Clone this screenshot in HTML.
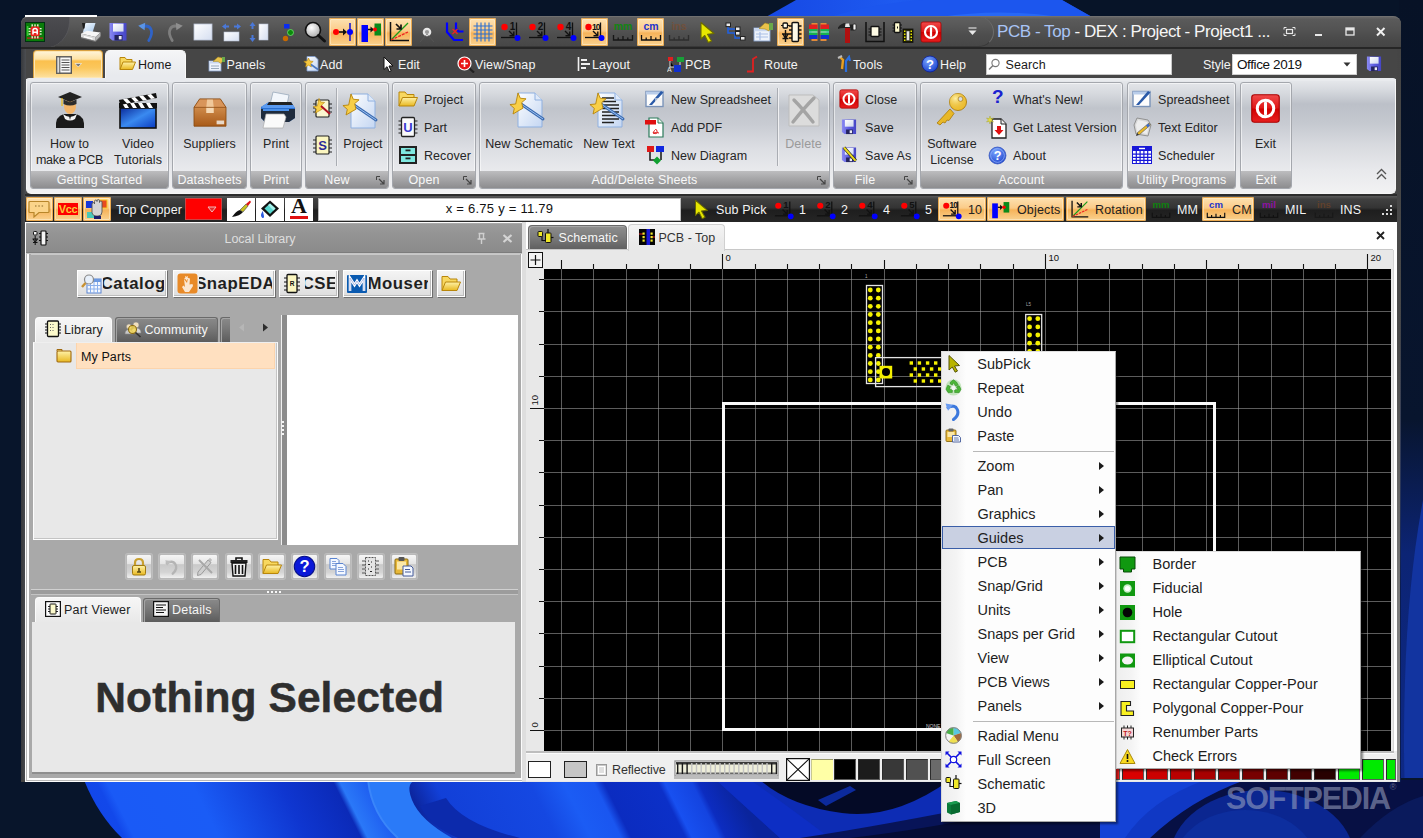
<!DOCTYPE html>
<html><head><meta charset="utf-8"><title>DEX</title>
<style>
*{box-sizing:border-box;margin:0;padding:0}
html,body{width:1423px;height:838px;overflow:hidden;background:#08152b;font-family:"Liberation Sans",sans-serif;font-size:13px;color:#222}
.abs{position:absolute}
.t{white-space:nowrap;transform:translateY(-50%);line-height:1.15}
.tc{transform:translate(-50%,-50%);text-align:center}
.qon{background:linear-gradient(#fde3b4 0,#fbcb88 46%,#f6b35a 54%,#fad493 100%);box-shadow:inset 0 0 0 1px #eaa94f, inset 0 0 0 2px rgba(255,240,210,.55);border-radius:2px}
.rg{border:1px solid #a4a7ad;border-radius:3px;background:linear-gradient(#e3e5e9 0,#d6d9de 10%,#c0c4cb 24%,#c9ccd3 40%,#dcdee3 62%,#e9eaed 84%,#eceef0 100%);box-shadow:inset 0 0 0 1px rgba(255,255,255,.55)}
.rlab{background:linear-gradient(#bdbdbf 0,#a6a6a8 45%,#8d8d8f 100%);border-radius:0 0 2px 2px}
.pbtn{background:linear-gradient(#f4f4f4,#dedede);border:1px solid #fff;box-shadow:1px 1px 0 #6d6d6d, inset -1px -1px 0 #bcbcbc;}
.ibtn{background:linear-gradient(#f6f6f6 0,#e4e4e4 38%,#c9c9c9 42%,#d4d4d4 75%,#f0f0f0 100%);border:1px solid #b9b9b9;border-radius:2px;box-shadow:0 0 0 1px rgba(255,255,255,.25)}
.menu{background:#fcfcfc;border:1px solid #9a9a9a;box-shadow:2px 2px 2px rgba(0,0,0,.4)}
.arr{width:0;height:0;border-left:5px solid #1a1a1a;border-top:4px solid transparent;border-bottom:4px solid transparent}
</style></head>
<body>
<svg width="0" height="0" style="position:absolute"><defs><linearGradient id="gpp" x1="0" y1="0" x2="1" y2="1"><stop offset="0" stop-color="#f6fafe"/><stop offset="1" stop-color="#a9cbee"/></linearGradient>
<linearGradient id="gsvb" x1="0" y1="0" x2="1" y2="0"><stop offset="0" stop-color="#8a8af2"/><stop offset=".5" stop-color="#5c5ce0"/><stop offset="1" stop-color="#4646c4"/></linearGradient>
<linearGradient id="gsv" x1="0" y1="0" x2="1" y2="1"><stop offset="0" stop-color="#fff"/><stop offset="1" stop-color="#cfd8ee"/></linearGradient>
<linearGradient id="gwb" x1="0" y1="0" x2="1" y2="1"><stop offset="0" stop-color="#fff"/><stop offset="1" stop-color="#d5def0"/></linearGradient>
<radialGradient id="gmg" cx=".4" cy=".35" r=".7"><stop offset="0" stop-color="#fff"/><stop offset="1" stop-color="#a8a8a8"/></radialGradient>
<linearGradient id="grd" x1="0" y1="0" x2="0" y2="1"><stop offset="0" stop-color="#f04a4a"/><stop offset=".48" stop-color="#e01818"/><stop offset=".52" stop-color="#d00000"/><stop offset="1" stop-color="#e82020"/></linearGradient>
<linearGradient id="gfo" x1="0" y1="0" x2="0" y2="1"><stop offset="0" stop-color="#fff2a8"/><stop offset="1" stop-color="#e8b820"/></linearGradient>
<linearGradient id="gpg" x1="0" y1="0" x2="1" y2="1"><stop offset="0" stop-color="#fdfeff"/><stop offset="1" stop-color="#c4d6f2"/></linearGradient>
<radialGradient id="ghl" cx=".4" cy=".3" r=".8"><stop offset="0" stop-color="#7aa6ff"/><stop offset="1" stop-color="#1238c8"/></radialGradient>
<linearGradient id="gbx" x1="0" y1="0" x2="0" y2="1"><stop offset="0" stop-color="#e0a060"/><stop offset="1" stop-color="#a85a18"/></linearGradient>
<symbol id="i-app" viewBox="0 0 20 20"><rect x=".5" y=".5" width="19" height="19" fill="#0a7d0a" stroke="#031" stroke-width="1"/><rect x="2" y="15.5" width="16" height="1.2" fill="#c22"/><rect x="1.8" y="4" width="1.6" height="10" fill="#3c3" /><g fill="#f2f2d8"><rect x="6.5" y="2.3" width="1.4" height="2.4"/><rect x="9.3" y="2.3" width="1.4" height="2.4"/><rect x="12.1" y="2.3" width="1.4" height="2.4"/><rect x="6.5" y="14" width="1.4" height="2.4"/><rect x="9.3" y="14" width="1.4" height="2.4"/><rect x="12.1" y="14" width="1.4" height="2.4"/><rect x="3.6" y="6" width="2.2" height="1.3"/><rect x="3.6" y="8.7" width="2.2" height="1.3"/><rect x="3.6" y="11.4" width="2.2" height="1.3"/><rect x="14.4" y="6" width="2.2" height="1.3"/><rect x="14.4" y="8.7" width="2.2" height="1.3"/><rect x="14.4" y="11.4" width="2.2" height="1.3"/></g><rect x="5.6" y="4.6" width="9" height="9.6" rx="1.5" fill="#e8221c"/><path d="M8 12.6V8.2q0-1.8 2.1-1.8t2.1 1.8v4.4M8 10.2h4.2" stroke="#fff" stroke-width="1.5" fill="none"/></symbol><symbol id="i-printer" viewBox="0 0 24 24"><path d="M7.500 3h10l-3 9.500H4.800z" fill="url(#gpp)"/><path d="M4 3h3.200l-.7 5.500H5z" fill="#1c1c1c"/><path d="M3 13.500L9 10.800l13.500 1.700L17.500 17z" fill="#f6f6f6"/><path d="M3 13.500L17.500 17v4L3 17.200z" fill="#dcdcdc"/><path d="M17.500 17l5-4.500v3.800l-5 4.700z" fill="#b4b4b4"/><path d="M6 16l8.500 2.200v1.300L6 17.300z" fill="#fff"/><path d="M3 17.200L17.500 21l5-4.700v1L17.500 22 3 18.200z" fill="#8a8a8a" opacity=".6"/></symbol><symbol id="i-save" viewBox="0 0 24 24"><path d="M3.500 3h17v17.500H6.500l-3-2.500z" fill="url(#gsvb)"/><rect x="7" y="3.600" width="10.500" height="8" fill="url(#gsv)"/><rect x="8.500" y="15" width="8" height="5.500" fill="#23235e"/><rect x="12.800" y="16" width="2.800" height="3.400" fill="#ececf6"/></symbol><symbol id="i-undo" viewBox="0 0 24 24"><path d="M8 6.800Q14.500 4.500 16.800 9T14.800 20.500" fill="none" stroke="#2f63c8" stroke-width="2.800" stroke-linecap="round"/><path d="M4.200 5.800l7-3-.6 7.400z" fill="#5a94e6"/></symbol><symbol id="i-redo" viewBox="0 0 24 24"><path d="M16 6.800Q9.500 4.500 7.200 9T9.200 20.500" fill="none" stroke="#7e7e7e" stroke-width="2.800" stroke-linecap="round"/><path d="M19.800 5.800l-7-3 .6 7.400z" fill="#8e8e8e"/></symbol><symbol id="i-rect" viewBox="0 0 24 24"><rect x="3" y="4" width="18" height="16" fill="url(#gwb)" stroke="#b9c3d6" stroke-width=".8"/></symbol><symbol id="i-fitw" viewBox="0 0 24 24"><rect x="5" y="12" width="15" height="9" fill="url(#gwb)" stroke="#b9c3d6" stroke-width=".6"/><path d="M3 6.500l4-3v2h3v2H7v2zM22 6.500l-4-3v2h-3v2h3v2z" fill="#4a78d8"/></symbol><symbol id="i-fith" viewBox="0 0 24 24"><rect x="12" y="4" width="9" height="16" fill="url(#gwb)" stroke="#b9c3d6" stroke-width=".6"/><path d="M5.500 2l3 4h-2v3h-2V6h-2zM5.500 22l3-4h-2v-3h-2v3h-2z" fill="#4a78d8"/></symbol><symbol id="i-flow" viewBox="0 0 24 24"><rect x="9" y="4" width="5.500" height="4.500" fill="#0a2cf0"/><circle cx="15.500" cy="12.500" r="3" fill="#0a8a0a" stroke="#6d6" stroke-width=".9"/><circle cx="10.500" cy="18.500" r="2.700" fill="#c96a00"/></symbol><symbol id="i-mag" viewBox="0 0 24 24"><circle cx="10" cy="10" r="7.500" fill="url(#gmg)" stroke="#111" stroke-width="1.600"/><path d="M15.500 15.500l6 5.500" stroke="#111" stroke-width="3" stroke-linecap="round"/></symbol><symbol id="i-snap" viewBox="0 0 24 24"><circle cx="5" cy="12" r="3" fill="#f00"/><path d="M8 12h6" stroke="#111" stroke-width="1.600"/><path d="M12 8.500l4 3.500-4 3.500z" fill="#111"/><path d="M19 3v18" stroke="#1a1acc" stroke-width="1.600"/><circle cx="19" cy="12" r="3" fill="#00f"/></symbol><symbol id="i-obj" viewBox="0 0 24 24"><rect x="2.500" y="5" width="6.500" height="17" fill="#00f"/><rect x="15.500" y="3.500" width="6.500" height="12" fill="#0a8a1a"/><path d="M9 9.500h4" stroke="#111" stroke-width="1.500"/><path d="M11.500 6.500l3.500 3-3.500 3z" fill="#111"/><circle cx="16" cy="9.500" r="2" fill="#f00"/></symbol><symbol id="i-rot" viewBox="0 0 24 24"><path d="M3.500 2v18.500H22" stroke="#111" stroke-width="1.500" fill="none"/><path d="M4 20L21 3" stroke="#1a9a1a" stroke-width="1.300"/><path d="M4 20l17-8" stroke="#e22" stroke-width="1.300" stroke-dasharray="3 1"/><path d="M9 4l4.500 4.500M14 4.500v4.500H9.500" stroke="#111" stroke-width="1.700" fill="none"/></symbol><symbol id="i-circ" viewBox="0 0 24 24"><circle cx="12" cy="12" r="3.200" fill="#999" stroke="#e8e8e8" stroke-width="2.200"/><path d="M12 14l-7 8M12 14l7 8" stroke="#5a5a5a" stroke-width=".6"/></symbol><symbol id="i-route" viewBox="0 0 24 24"><path d="M4 2.500v9.500l7 8h9" stroke="#00f" stroke-width="2.200" fill="none"/><path d="M13 2.500v6l2.500 3h5" stroke="#00f" stroke-width="2.200" fill="none"/><path d="M9.500 9l5 5M14.500 9l-5 5" stroke="#e22" stroke-width="1.300"/></symbol><symbol id="i-grid" viewBox="0 0 24 24"><path d="M6 2.500v19M10 2.500v19M14 2.500v19M18 2.500v19M2.500 6h19M2.500 10h19M2.500 14h19M2.500 18h19" stroke="#2a6fd0" stroke-width="1.100"/></symbol><symbol id="i-n1" viewBox="0 0 24 24"><circle cx="5.5" cy="7" r="3.2" fill="#f00"/><path d="M17.5 2.5V17" stroke="#111" stroke-width="1.3" fill="none"/><path d="M2 17.5H17" stroke="#111" stroke-width="1.3"/><path d="M10 11l4.5 4.5M14.8 11.5v4.3h-4.3" stroke="#111" stroke-width="1.4" fill="none"/><circle cx="18.5" cy="18" r="3" fill="#00f"/><text x="16.2" y="9.5" font-family="Liberation Sans" font-size="10" font-weight="bold" text-anchor="end" fill="#111" >1</text></symbol><symbol id="i-n2" viewBox="0 0 24 24"><circle cx="5.5" cy="7" r="3.2" fill="#f00"/><path d="M17.5 2.5V17" stroke="#111" stroke-width="1.3" fill="none"/><path d="M2 17.5H17" stroke="#111" stroke-width="1.3"/><path d="M10 11l4.5 4.5M14.8 11.5v4.3h-4.3" stroke="#111" stroke-width="1.4" fill="none"/><circle cx="18.5" cy="18" r="3" fill="#00f"/><text x="16.2" y="9.5" font-family="Liberation Sans" font-size="10" font-weight="bold" text-anchor="end" fill="#111" >2</text></symbol><symbol id="i-n4" viewBox="0 0 24 24"><circle cx="5.5" cy="7" r="3.2" fill="#f00"/><path d="M17.5 2.5V17" stroke="#111" stroke-width="1.3" fill="none"/><path d="M2 17.5H17" stroke="#111" stroke-width="1.3"/><path d="M10 11l4.5 4.5M14.8 11.5v4.3h-4.3" stroke="#111" stroke-width="1.4" fill="none"/><circle cx="18.5" cy="18" r="3" fill="#00f"/><text x="16.2" y="9.5" font-family="Liberation Sans" font-size="10" font-weight="bold" text-anchor="end" fill="#111" >4</text></symbol><symbol id="i-n5" viewBox="0 0 24 24"><circle cx="5.5" cy="7" r="3.2" fill="#f00"/><path d="M17.5 2.5V17" stroke="#111" stroke-width="1.3" fill="none"/><path d="M2 17.5H17" stroke="#111" stroke-width="1.3"/><path d="M10 11l4.5 4.5M14.8 11.5v4.3h-4.3" stroke="#111" stroke-width="1.4" fill="none"/><circle cx="18.5" cy="18" r="3" fill="#00f"/><text x="16.2" y="9.5" font-family="Liberation Sans" font-size="10" font-weight="bold" text-anchor="end" fill="#111" >5</text></symbol><symbol id="i-n10" viewBox="0 0 24 24"><circle cx="5.5" cy="7" r="3.2" fill="#f00"/><path d="M17.5 2.5V17" stroke="#111" stroke-width="1.3" fill="none"/><path d="M2 17.5H17" stroke="#111" stroke-width="1.3"/><path d="M10 11l4.5 4.5M14.8 11.5v4.3h-4.3" stroke="#111" stroke-width="1.4" fill="none"/><circle cx="18.5" cy="18" r="3" fill="#00f"/><text x="16.8" y="9.5" font-family="Liberation Sans" font-size="8.5" font-weight="bold" text-anchor="end" fill="#111" letter-spacing="-0.8">10</text></symbol><symbol id="i-mm" viewBox="0 0 24 24"><g opacity="0.9"><text x="12" y="10" font-family="Liberation Sans" font-size="10.5" font-weight="bold" text-anchor="middle" fill="#0a8a0a">mm</text><path d="M2.5 15v5h19v-5M7.2 17.5v2.5M12 16v4M16.8 17.5v2.5" stroke="#111" stroke-width="1.3" fill="none"/></g></symbol><symbol id="i-cm" viewBox="0 0 24 24"><g opacity="1"><text x="12" y="10" font-family="Liberation Sans" font-size="10.5" font-weight="bold" text-anchor="middle" fill="#2233cc">cm</text><path d="M2.5 15v5h19v-5M7.2 17.5v2.5M12 16v4M16.8 17.5v2.5" stroke="#111" stroke-width="1.3" fill="none"/></g></symbol><symbol id="i-mil" viewBox="0 0 24 24"><g opacity="0.9"><text x="12" y="10" font-family="Liberation Sans" font-size="10.5" font-weight="bold" text-anchor="middle" fill="#9a10b0">mil</text><path d="M2.5 15v5h19v-5M7.2 17.5v2.5M12 16v4M16.8 17.5v2.5" stroke="#111" stroke-width="1.3" fill="none"/></g></symbol><symbol id="i-ins" viewBox="0 0 24 24"><g opacity="0.5"><text x="12" y="10" font-family="Liberation Sans" font-size="10.5" font-weight="bold" text-anchor="middle" fill="#8a4a20">ins</text><path d="M2.5 15v5h19v-5M7.2 17.5v2.5M12 16v4M16.8 17.5v2.5" stroke="#111" stroke-width="1.3" fill="none"/></g></symbol><symbol id="i-yarrow" viewBox="0 0 24 24"><path d="M6 2.500l13 11-6.500.8 4 6.700-3.200 1.500-3.500-7L6 19z" fill="#e6e600" stroke="#6b6b00" stroke-width="1.100" stroke-linejoin="round"/></symbol><symbol id="i-tree" viewBox="0 0 24 24"><path d="M5 7v6h7M12 13v5h6" stroke="#2060e0" stroke-width="1.600" fill="none"/><path d="M5 9h8" stroke="#2060e0" stroke-width="1.600"/><rect x="3" y="3" width="4.500" height="3.600" fill="#e8e8e8" stroke="#222" stroke-width="1"/><rect x="12.500" y="7" width="4.500" height="3.600" fill="#e8e8e8" stroke="#222" stroke-width="1"/><rect x="12.500" y="11.500" width="4.500" height="3.600" fill="#e8e8e8" stroke="#222" stroke-width="1"/><rect x="17.500" y="16.500" width="4.500" height="3.600" fill="#e8e8e8" stroke="#222" stroke-width="1"/></symbol><symbol id="i-panels" viewBox="0 0 24 24"><rect x="3" y="8" width="16" height="13" fill="#eef3fb" stroke="#8aa4cf" stroke-width=".9"/><rect x="3" y="8" width="16" height="3.200" fill="#c9d7ef"/><path d="M5 14h12M5 17h12M9 12v8" stroke="#a9bfe6" stroke-width="1.200"/><path d="M8 8.500L14 3l7 2-3 6-4-2z" fill="#e9c24a" stroke="#a88a20" stroke-width=".6"/><rect x="18" y="3" width="4" height="7" fill="#6aa84a"/></symbol><symbol id="i-comp" viewBox="0 0 24 24"><rect x="13" y="2.500" width="6.500" height="19" rx="1" fill="#fffbe8" stroke="#111" stroke-width="1.400"/><path d="M10 6h3M10 10h3M10 14h3M10 18h3M19.500 6h3M19.500 10h3M19.500 14h3M19.500 18h3" stroke="#111" stroke-width="1.300"/><rect x="4" y="3" width="4.500" height="5" rx="1" fill="#fffbe8" stroke="#111" stroke-width="1.300"/><path d="M2 5.500h2M8.500 5.500h2" stroke="#111" stroke-width="1.200"/><path d="M6.500 10v12M3 14h7M3.500 18.500h6M4 14l2.500 4.500L9 14" stroke="#111" stroke-width="1.400" fill="none"/></symbol><symbol id="i-layers" viewBox="0 0 24 24"><g><rect x="4.500" y="3" width="6" height="18" fill="#e08a3a"/><rect x="13.500" y="3" width="6" height="18" fill="#e08a3a"/><rect x="2" y="4.500" width="8.500" height="4.500" fill="#e02020"/><rect x="2" y="9" width="8.500" height="2.500" fill="#18b050"/><rect x="2" y="11.500" width="8.500" height="1.200" fill="#6fe"/><rect x="2" y="12.700" width="8.500" height="2.300" fill="#18b050"/><rect x="2" y="15" width="8.500" height="4" fill="#1030d0"/><rect x="13.500" y="4.500" width="8.500" height="4.500" fill="#e02020"/><rect x="13.500" y="9" width="8.500" height="2.500" fill="#18b050"/><rect x="13.500" y="11.500" width="8.500" height="1.200" fill="#6fe"/><rect x="13.500" y="12.700" width="8.500" height="2.300" fill="#18b050"/><rect x="13.500" y="15" width="8.500" height="4" fill="#1030d0"/></g></symbol><symbol id="i-hammer" viewBox="0 0 24 24"><rect x="10" y="8" width="5" height="15" fill="#b01010"/><path d="M3 7.500Q6 3 11 3l3 1.500h5v6h-3.500V8H9Q5 8 3 9z" fill="#222"/><path d="M10.500 3.500h3.500l1 3.500h-5z" fill="#e8e8e8"/><rect x="18" y="4" width="3" height="6" rx="1" fill="#f2f2f2" stroke="#222" stroke-width=".8"/></symbol><symbol id="i-chip1" viewBox="0 0 24 24"><path d="M3 2v19.500h18V2" stroke="#111" stroke-width="1.500" fill="none"/><rect x="8" y="6.500" width="8" height="10" rx=".8" fill="#fffce6" stroke="#111" stroke-width="1.300"/><path d="M5.500 9h2.500M5.500 12h2.500M5.500 15h2.500M16 9h2.500M16 12h2.500M16 15h2.500" stroke="#111" stroke-width="1.100"/></symbol><symbol id="i-chip2" viewBox="0 0 24 24"><rect x="3.500" y="2.500" width="5.500" height="10" rx=".8" fill="#fffbd0" stroke="#111" stroke-width="1.300"/><path d="M1.500 5h2M1.500 8h2M1.500 11h2M9 5h2M9 8h2M9 11h2" stroke="#111" stroke-width="1.100"/><rect x="6" y="6.500" width="1" height="2" fill="#111"/><rect x="12" y="9" width="10" height="13.500" fill="#1c1c00" stroke="#111" stroke-width=".8"/><rect x="15.500" y="11" width="3" height="9.500" fill="#e8e8e8" stroke="#555" stroke-width=".6"/><g fill="#e6e600"><rect x="13" y="10.500" width="1.500" height="1.500"/><rect x="13" y="13.500" width="1.500" height="1.500"/><rect x="13" y="16.500" width="1.500" height="1.500"/><rect x="13" y="19.500" width="1.500" height="1.500"/><rect x="19.500" y="10.500" width="1.500" height="1.500"/><rect x="19.500" y="13.500" width="1.500" height="1.500"/><rect x="19.500" y="16.500" width="1.500" height="1.500"/><rect x="19.500" y="19.500" width="1.500" height="1.500"/></g></symbol><symbol id="i-power" viewBox="0 0 24 24"><rect x="2" y="2" width="20" height="20" rx="2" fill="url(#grd)" stroke="#a00" stroke-width=".8"/><circle cx="12" cy="12" r="6" fill="none" stroke="#fff" stroke-width="2.200"/><path d="M12 8v8" stroke="#fff" stroke-width="2.200" stroke-linecap="round"/></symbol></defs></svg>
<svg class="abs" style="left:0;top:0" width="1423" height="838" viewBox="0 0 1423 838">
<defs>
<linearGradient id="wb" gradientUnits="userSpaceOnUse" x1="70" y1="810" x2="610.800" y2="539.600">
<stop offset="0" stop-color="#1244e6"/><stop offset=".06" stop-color="#1248ea"/><stop offset=".075" stop-color="#1a5af6"/><stop offset=".2" stop-color="#1a5cf6"/><stop offset=".33" stop-color="#0f36d0"/><stop offset=".41" stop-color="#0b2ab8"/>
<stop offset=".42" stop-color="#2a78f8"/><stop offset=".47" stop-color="#1c58ee"/><stop offset=".5" stop-color="#0a1c8a"/><stop offset=".56" stop-color="#1240d8"/><stop offset=".7" stop-color="#1548e2"/><stop offset=".75" stop-color="#1b5cf4"/><stop offset=".795" stop-color="#1a56f0"/><stop offset=".81" stop-color="#0b2cc0"/><stop offset=".89" stop-color="#0c30c8"/><stop offset=".9" stop-color="#1850f0"/><stop offset=".94" stop-color="#1444e0"/><stop offset=".95" stop-color="#0c2cc0"/><stop offset="1" stop-color="#0a249c"/>
</linearGradient>
<linearGradient id="wr2" gradientUnits="userSpaceOnUse" x1="726" y1="0" x2="1423" y2="0"><stop offset="0" stop-color="#0b2cb4"/><stop offset=".3" stop-color="#0a2498"/><stop offset=".6" stop-color="#081c78"/><stop offset="1" stop-color="#0b2490"/></linearGradient>
<linearGradient id="wr" x1="0" y1="0" x2="0" y2="1"><stop offset="0" stop-color="#071226"/><stop offset=".5" stop-color="#08152e"/><stop offset=".66" stop-color="#0c2474"/><stop offset="1" stop-color="#0e2a8a"/></linearGradient>
<linearGradient id="wt" x1="0" y1="0" x2="1" y2="0"><stop offset="0" stop-color="#1648e4"/><stop offset=".4" stop-color="#1e5af0"/><stop offset="1" stop-color="#1442d8"/></linearGradient>
</defs>
<rect width="1423" height="838" fill="#08152b"/>
<rect x="0" y="0" width="1423" height="20" fill="#071428"/>
<path d="M766 17L796 0H1062L1092 17z" fill="url(#wt)"/>
<path d="M830 17Q900 -6 1000 0L1062 0L1092 17z" fill="#1c56ee"/>
<path d="M940 17Q1000 8 1060 17z" fill="#2868f6"/>
<rect x="1399" y="0" width="24" height="838" fill="url(#wr)"/>
<path d="M1423 500Q1408 580 1405 680T1408 838H1423z" fill="#1234a0"/>
<!-- bottom strip -->
<rect x="0" y="778" width="1423" height="60" fill="#08152b"/>
<path d="M84 780Q98 815 122 838H1423V780z" fill="#071044"/>
<path d="M84 780Q98 815 122 838H790L726 780z" fill="url(#wb)"/>
<path d="M368 780Q372 815 398 838H452Q420 820 412 800T420 780z" fill="#2a7af8"/>
<path d="M420 806Q430 826 458 838H520Q462 824 446 798z" fill="#0c2aac"/><path d="M368 780Q372 815 398 838" stroke="#3a86fa" stroke-width="2" fill="none"/>
<path d="M716 780H1010V838H780z" fill="#0d2cb4"/>
<path d="M716 780L780 838H830Q780 800 750 780z" fill="#0d2ec4"/>
<path d="M760 780Q790 806 842 813T950 780z" fill="#040a26"/>
<path d="M818 800L850 786L856 790L826 806z" fill="#0c2a9c"/>
<path d="M800 838Q880 826 1010 800V838z" fill="#081458"/>
<path d="M850 838Q920 830 1010 812V838z" fill="#050c34"/>
<path d="M1100 780H1245Q1190 800 1150 838H1100z" fill="#1038c4"/>
<path d="M1100 780H1205Q1150 800 1125 838H1100z" fill="#1442d6"/>
<ellipse cx="1262" cy="858" rx="92" ry="68" fill="#0b2690"/>
<ellipse cx="1245" cy="866" rx="72" ry="56" fill="#0d2e9e"/>
<path d="M1360 838Q1390 806 1423 796V838z" fill="#0a1a5c"/>
</svg>
<div class="abs" style="left:1226px;top:781px;font-size:30.500px;font-weight:bold;color:rgba(165,172,198,.55);letter-spacing:-1.2px;white-space:nowrap">SOFTPEDIA<span style="font-size:9px;vertical-align:top;position:relative;top:1px;font-weight:normal">&reg;</span></div>
<div class="abs " style="left:21px;top:16px;width:1380px;height:766px;background:#424242;border-radius:8px 8px 0 0"></div>
<div class="abs " style="left:21px;top:48px;width:5px;height:732px;background:linear-gradient(90deg,#36383c,#4c4e52)"></div>
<div class="abs " style="left:1396px;top:48px;width:5px;height:734px;background:linear-gradient(#454545 0,#4a4a4a 40%,#7a7a7a 75%,#8e8e8e 100%)"></div>
<div class="abs " style="left:1400px;top:300px;width:1px;height:482px;background:linear-gradient(rgba(8,21,43,0),#0a1c50 60%)"></div>
<div class="abs " style="left:21px;top:16px;width:1380px;height:32px;background:linear-gradient(#666 0,#5a5a5a 8%,#535353 40%,#4a4a4a 70%,#444 100%);border-radius:8px 8px 0 0;border-top:1px solid #707070"></div>
<div class="abs " style="left:55px;top:17px;width:939px;height:30px;background:linear-gradient(#606060 0,#585858 30%,#4e4e4e 60%,#474747 100%);border-radius:0 15px 15px 0;border-right:1px solid #6c6c6c;border-bottom:1px solid #383838"></div>
<div class="abs " style="left:21px;top:17px;width:49px;height:31px;background:linear-gradient(#4c4c50,#3e3e42);border-radius:8px 0 26px 0;border-right:1px solid #58585c"></div>
<div class="abs " style="left:21px;top:47px;width:1380px;height:2px;background:#262626"></div>
<div class="abs " style="left:25px;top:15px;width:72px;height:2px;background:#fdfdfd"></div>
<svg class="abs" style="left:25px;top:22px" width="20" height="20"><use href="#i-app"/></svg>
<svg class="abs" style="left:78px;top:20px" width="24" height="24"><use href="#i-printer"/></svg>
<svg class="abs" style="left:106px;top:20px" width="24" height="24"><use href="#i-save"/></svg>
<svg class="abs" style="left:134px;top:20px" width="24" height="24"><use href="#i-undo"/></svg>
<svg class="abs" style="left:163px;top:20px" width="24" height="24"><use href="#i-redo"/></svg>
<svg class="abs" style="left:191px;top:20px" width="24" height="24"><use href="#i-rect"/></svg>
<svg class="abs" style="left:219px;top:20px" width="24" height="24"><use href="#i-fitw"/></svg>
<svg class="abs" style="left:247px;top:20px" width="24" height="24"><use href="#i-fith"/></svg>
<svg class="abs" style="left:275px;top:20px" width="24" height="24"><use href="#i-flow"/></svg>
<svg class="abs" style="left:303px;top:20px" width="24" height="24"><use href="#i-mag"/></svg>
<div class="abs qon" style="left:329.0px;top:18px;width:27.0px;height:28px;"></div>
<svg class="abs" style="left:330.5px;top:20px" width="24" height="24"><use href="#i-snap"/></svg>
<div class="abs qon" style="left:357.0px;top:18px;width:27.0px;height:28px;"></div>
<svg class="abs" style="left:358.5px;top:20px" width="24" height="24"><use href="#i-obj"/></svg>
<div class="abs qon" style="left:385.0px;top:18px;width:27.0px;height:28px;"></div>
<svg class="abs" style="left:386.5px;top:20px" width="24" height="24"><use href="#i-rot"/></svg>
<svg class="abs" style="left:415px;top:20px" width="24" height="24"><use href="#i-circ"/></svg>
<svg class="abs" style="left:443px;top:20px" width="24" height="24"><use href="#i-route"/></svg>
<div class="abs qon" style="left:469.0px;top:18px;width:27.0px;height:28px;"></div>
<svg class="abs" style="left:470.5px;top:20px" width="24" height="24"><use href="#i-grid"/></svg>
<svg class="abs" style="left:499px;top:20px" width="24" height="24"><use href="#i-n1"/></svg>
<svg class="abs" style="left:527px;top:20px" width="24" height="24"><use href="#i-n2"/></svg>
<svg class="abs" style="left:555px;top:20px" width="24" height="24"><use href="#i-n4"/></svg>
<div class="abs qon" style="left:581.0px;top:18px;width:27.0px;height:28px;"></div>
<svg class="abs" style="left:582.5px;top:20px" width="24" height="24"><use href="#i-n10"/></svg>
<svg class="abs" style="left:611px;top:20px" width="24" height="24"><use href="#i-mm"/></svg>
<div class="abs qon" style="left:637.0px;top:18px;width:27.0px;height:28px;"></div>
<svg class="abs" style="left:638.5px;top:20px" width="24" height="24"><use href="#i-cm"/></svg>
<svg class="abs" style="left:667px;top:20px" width="24" height="24"><use href="#i-ins"/></svg>
<svg class="abs" style="left:695px;top:20px" width="24" height="24"><use href="#i-yarrow"/></svg>
<svg class="abs" style="left:723px;top:20px" width="24" height="24"><use href="#i-tree"/></svg>
<svg class="abs" style="left:751px;top:20px" width="24" height="24"><use href="#i-panels"/></svg>
<div class="abs qon" style="left:777.0px;top:18px;width:27.0px;height:28px;"></div>
<svg class="abs" style="left:778.5px;top:20px" width="24" height="24"><use href="#i-comp"/></svg>
<svg class="abs" style="left:807px;top:20px" width="24" height="24"><use href="#i-layers"/></svg>
<svg class="abs" style="left:835px;top:20px" width="24" height="24"><use href="#i-hammer"/></svg>
<svg class="abs" style="left:863px;top:20px" width="24" height="24"><use href="#i-chip1"/></svg>
<svg class="abs" style="left:891px;top:20px" width="24" height="24"><use href="#i-chip2"/></svg>
<svg class="abs" style="left:919px;top:20px" width="24" height="24"><use href="#i-power"/></svg>
<svg class="abs" style="left:967px;top:27px" width="11" height="9" viewBox="0 0 11 9"><path d="M1.500 1h8" stroke="#ddd" stroke-width="1.200"/><path d="M1.500 3.500h8l-4 4.500z" fill="#e8e8e8"/></svg>
<div class="abs t" style="left:997px;top:32px;font-size:17px;color:#f6f6f6;letter-spacing:-0.44px"><span style="color:#a9c4f5">PCB - Top</span> - DEX : Project - Project1 ...</div>
<svg class="abs" style="left:1283px;top:25px" width="110" height="14" viewBox="0 0 110 14"><g stroke="#e8e8e8" fill="none"><rect x="3.500" y="4.500" width="6" height="4" stroke-width="1.200"/><path d="M1 4.500V2.500h2.500M12 4.500V2.500H9.500M1 8.500v2h2.500M12 8.500v2H9.500" stroke-width="1"/></g><rect x="32" y="9" width="7" height="2" fill="#e8e8e8"/><rect x="63" y="3" width="8" height="7" fill="none" stroke="#e8e8e8" stroke-width="1.300"/><rect x="63" y="3" width="8" height="2.500" fill="#e8e8e8"/><path d="M94 3l7.500 7.500M101.500 3L94 10.500" stroke="#f0f0f0" stroke-width="2"/></svg>
<div class="abs " style="left:26px;top:49px;width:1371px;height:30px;background:#464646"></div>
<div class="abs " style="left:33px;top:50px;width:70px;height:28px;background:linear-gradient(#fff5da 0,#fde2a6 30%,#fbc04e 37%,#fbc75c 62%,#fde2a2 100%);border-radius:4px 4px 0 0;box-shadow:inset 0 0 0 1px #fde6b4;border:1px solid #d8a040;border-bottom:none"></div>
<svg class="abs" style="left:56px;top:56px" width="28" height="18" viewBox="0 0 28 18"><rect x=".8" y=".8" width="14.500" height="16.400" fill="#fafafa" stroke="#555" stroke-width="1.400"/><rect x=".8" y=".8" width="3" height="16.400" fill="#ddd" stroke="#555" stroke-width="1"/><path d="M5.500 4h8M5.500 6.500h8M5.500 9h8M5.500 11.500h8M5.500 14h8" stroke="#555" stroke-width="1.100"/><path d="M19 7.500h6.500l-3.250 3.500z" fill="#777" stroke="#fff" stroke-width=".6"/></svg>
<div class="abs " style="left:105px;top:50px;width:81px;height:30px;background:linear-gradient(#f4f5f7,#e6e8ec);border-radius:5px 5px 0 0;border:1px solid #f8f8f8;border-bottom:none"></div>
<svg class="abs" style="left:119px;top:56px" width="17" height="15" viewBox="0 0 17 15"><path d="M1 13.500V1.500h5l1.500 2H13v3" fill="#f8d860" stroke="#b8860b" stroke-width="1"/><path d="M1 13.500l3-7.500h12.500l-3 7.500z" fill="url(#gfo)" stroke="#b8860b" stroke-width="1"/></svg>
<div class="abs t" style="left:138px;top:64.5px;font-size:12.5px;color:#1a1a1a;">Home</div>
<div class="abs t" style="left:226.5px;top:64.5px;font-size:12.5px;color:#f4f4f4;letter-spacing:0.1px">Panels</div>
<div class="abs t" style="left:320px;top:64.5px;font-size:12.5px;color:#f4f4f4;letter-spacing:0.1px">Add</div>
<div class="abs t" style="left:398px;top:64.5px;font-size:12.5px;color:#f4f4f4;letter-spacing:0.1px">Edit</div>
<div class="abs t" style="left:475px;top:64.5px;font-size:12.5px;color:#f4f4f4;letter-spacing:0.1px">View/Snap</div>
<div class="abs t" style="left:592px;top:64.5px;font-size:12.5px;color:#f4f4f4;letter-spacing:0.1px">Layout</div>
<div class="abs t" style="left:685px;top:64.5px;font-size:12.5px;color:#f4f4f4;letter-spacing:0.1px">PCB</div>
<div class="abs t" style="left:764px;top:64.5px;font-size:12.5px;color:#f4f4f4;letter-spacing:0.1px">Route</div>
<div class="abs t" style="left:853px;top:64.5px;font-size:12.5px;color:#f4f4f4;letter-spacing:0.1px">Tools</div>
<div class="abs t" style="left:940px;top:64.5px;font-size:12.5px;color:#f4f4f4;letter-spacing:0.1px">Help</div>
<svg class="abs" style="left:208px;top:56px" width="18" height="16" viewBox="0 0 18 16"><rect x="1" y="5" width="12" height="10" fill="#eef3fb" stroke="#8aa4cf" stroke-width=".8"/><rect x="1" y="5" width="12" height="2.500" fill="#c9d7ef"/><path d="M3 10h8M3 12.500h8" stroke="#9ab" stroke-width="1"/><path d="M5 5.500L10 1l6 1.500-3 5-3-2z" fill="#e9c24a" stroke="#a88a20" stroke-width=".5"/><rect x="14" y="1" width="3" height="5" fill="#6aa84a"/></svg>
<svg class="abs" style="left:302px;top:55px" width="18" height="18" viewBox="0 0 18 18"><path d="M5 1.500h8l3 3V16H5z" fill="url(#gpg)" stroke="#7d9ccf" stroke-width=".8"/><path d="M6.500 3l1.400 3 3.300.4-2.500 2.200.7 3.300-2.900-1.700-2.900 1.700.7-3.300L1.800 6.400l3.300-.4z" fill="#f6c840" stroke="#b8860b" stroke-width=".6"/><path d="M9 9.500l7 5" stroke="#4a78c0" stroke-width="1.600"/></svg>
<svg class="abs" style="left:383px;top:56px" width="12" height="17" viewBox="0 0 12 17"><path d="M1 1v12.500l3-2.800 2.200 5 2-.9-2.200-4.800H10z" fill="#fff" stroke="#111" stroke-width="1"/></svg>
<svg class="abs" style="left:457px;top:56px" width="18" height="17" viewBox="0 0 18 17"><circle cx="7.500" cy="7.500" r="6.500" fill="#e81818" stroke="#fff" stroke-width="1.200"/><path d="M7.500 4v7M4 7.500h7" stroke="#fff" stroke-width="1.600"/><path d="M12.500 12.500l4.500 4" stroke="#222" stroke-width="2.200"/></svg>
<svg class="abs" style="left:577px;top:57px" width="14" height="14" viewBox="0 0 14 14"><path d="M1.500 0v14" stroke="#f0f0f0" stroke-width="1.600"/><path d="M4 3h6M4 7h9M4 11h5" stroke="#f0f0f0" stroke-width="2"/></svg>
<svg class="abs" style="left:667px;top:56px" width="18" height="17" viewBox="0 0 18 17"><rect x="1" y="1" width="5" height="4" fill="#e02020"/><rect x="10" y="1" width="7" height="5" fill="#18a038"/><rect x="7" y="9" width="7" height="7" fill="#1030d0"/><path d="M3 5v6h4M13 6v3" stroke="#ddd" stroke-width="1"/><text x="0" y="16" font-size="7" fill="#eee" font-family="Liberation Sans">A</text></svg>
<svg class="abs" style="left:745px;top:55px" width="18" height="18" viewBox="0 0 18 18"><path d="M2 16.500h6V4l4-2.500" stroke="#e02020" stroke-width="1.800" fill="none"/></svg>
<svg class="abs" style="left:835px;top:55px" width="18" height="18" viewBox="0 0 18 18"><path d="M5 2l3 3-1 9" stroke="#e8a020" stroke-width="2.400" fill="none"/><path d="M11 17V6l3-4 1 4" stroke="#2a6fe0" stroke-width="2.200" fill="none"/><path d="M3 3l4-2" stroke="#bbb" stroke-width="2"/></svg>
<svg class="abs" style="left:921px;top:55px" width="18" height="18" viewBox="0 0 18 18"><circle cx="9" cy="9" r="8" fill="url(#ghl)" stroke="#0a1f9a" stroke-width=".8"/><text x="9" y="13.500" font-size="13" font-weight="bold" text-anchor="middle" fill="#fff" font-family="Liberation Sans">?</text></svg>
<div class="abs " style="left:986px;top:54px;width:186px;height:21px;background:#fff;border:1px solid #c8c8c8"></div>
<svg class="abs" style="left:988px;top:58px" width="13" height="13" viewBox="0 0 13 13"><circle cx="7.500" cy="5" r="3.600" fill="none" stroke="#777" stroke-width="1.100"/><path d="M5 7.500L1 11.500" stroke="#777" stroke-width="1.400"/></svg>
<div class="abs t" style="left:1005.5px;top:64.5px;font-size:12.5px;color:#1a1a1a;letter-spacing:0.1px">Search</div>
<div class="abs t" style="left:1203px;top:64.5px;font-size:12.5px;color:#f4f4f4;letter-spacing:0px">Style</div>
<div class="abs " style="left:1232px;top:54px;width:125px;height:21px;background:#fff;border:1px solid #d0d0d0"></div>
<div class="abs t" style="left:1237px;top:64.5px;font-size:13.5px;color:#111;letter-spacing:-0.38px">Office 2019</div>
<svg class="abs" style="left:1343px;top:62px" width="8" height="5" viewBox="0 0 8 5"><path d="M.5.500h7L4 4.500z" fill="#333"/></svg>
<svg class="abs" style="left:1364px;top:54px" width="20" height="20"><use href="#i-save"/></svg>
<div class="abs " style="left:26px;top:79px;width:1370px;height:115px;background:linear-gradient(#e8eaed 0,#d8dbe0 9%,#bcc0c8 22%,#c4c8cf 38%,#d8dadf 58%,#e8e9ec 80%,#f2f2f3 100%);border:1px solid #f6f6f6;border-top:none;border-radius:0 0 5px 5px"></div>
<div class="abs " style="left:26px;top:78px;width:1370px;height:3px;background:#e9ebee;border-radius:4px 4px 0 0"></div>
<div class="abs " style="left:106px;top:76px;width:79px;height:6px;background:#e8eaee"></div>
<div class="abs rg" style="left:30px;top:82px;width:139px;height:107px;"></div>
<div class="abs rlab" style="left:31px;top:171px;width:137px;height:17px;"></div>
<div class="abs t tc" style="left:99.5px;top:179.5px;font-size:12.5px;color:#f8f8f8;letter-spacing:0.1px">Getting Started</div>
<div class="abs rg" style="left:172px;top:82px;width:75px;height:107px;"></div>
<div class="abs rlab" style="left:173px;top:171px;width:73px;height:17px;"></div>
<div class="abs t tc" style="left:209.5px;top:179.5px;font-size:12.5px;color:#f8f8f8;letter-spacing:0.1px">Datasheets</div>
<div class="abs rg" style="left:250px;top:82px;width:52px;height:107px;"></div>
<div class="abs rlab" style="left:251px;top:171px;width:50px;height:17px;"></div>
<div class="abs t tc" style="left:276.0px;top:179.5px;font-size:12.5px;color:#f8f8f8;letter-spacing:0.1px">Print</div>
<div class="abs rg" style="left:305px;top:82px;width:84px;height:107px;"></div>
<div class="abs rlab" style="left:306px;top:171px;width:82px;height:17px;"></div>
<div class="abs t tc" style="left:337.0px;top:179.5px;font-size:12.5px;color:#f8f8f8;letter-spacing:0.1px">New</div>
<svg class="abs" style="left:376px;top:176px" width="9" height="9" viewBox="0 0 9 9"><path d="M.500 4V.500H4" stroke="#444" fill="none"/><path d="M3 3l4.500 4.500M8 4v4H4" stroke="#444" stroke-width="1.200" fill="none"/></svg>
<div class="abs rg" style="left:392px;top:82px;width:84px;height:107px;"></div>
<div class="abs rlab" style="left:393px;top:171px;width:82px;height:17px;"></div>
<div class="abs t tc" style="left:424.0px;top:179.5px;font-size:12.5px;color:#f8f8f8;letter-spacing:0.1px">Open</div>
<svg class="abs" style="left:463px;top:176px" width="9" height="9" viewBox="0 0 9 9"><path d="M.500 4V.500H4" stroke="#444" fill="none"/><path d="M3 3l4.500 4.500M8 4v4H4" stroke="#444" stroke-width="1.200" fill="none"/></svg>
<div class="abs rg" style="left:479px;top:82px;width:351px;height:107px;"></div>
<div class="abs rlab" style="left:480px;top:171px;width:349px;height:17px;"></div>
<div class="abs t tc" style="left:644.5px;top:179.5px;font-size:12.5px;color:#f8f8f8;letter-spacing:0.1px">Add/Delete Sheets</div>
<svg class="abs" style="left:817px;top:176px" width="9" height="9" viewBox="0 0 9 9"><path d="M.500 4V.500H4" stroke="#444" fill="none"/><path d="M3 3l4.500 4.500M8 4v4H4" stroke="#444" stroke-width="1.200" fill="none"/></svg>
<div class="abs rg" style="left:833px;top:82px;width:84px;height:107px;"></div>
<div class="abs rlab" style="left:834px;top:171px;width:82px;height:17px;"></div>
<div class="abs t tc" style="left:865.0px;top:179.5px;font-size:12.5px;color:#f8f8f8;letter-spacing:0.1px">File</div>
<svg class="abs" style="left:904px;top:176px" width="9" height="9" viewBox="0 0 9 9"><path d="M.500 4V.500H4" stroke="#444" fill="none"/><path d="M3 3l4.500 4.500M8 4v4H4" stroke="#444" stroke-width="1.200" fill="none"/></svg>
<div class="abs rg" style="left:920px;top:82px;width:203px;height:107px;"></div>
<div class="abs rlab" style="left:921px;top:171px;width:201px;height:17px;"></div>
<div class="abs t tc" style="left:1021.5px;top:179.5px;font-size:12.5px;color:#f8f8f8;letter-spacing:0.1px">Account</div>
<div class="abs rg" style="left:1127px;top:82px;width:109px;height:107px;"></div>
<div class="abs rlab" style="left:1128px;top:171px;width:107px;height:17px;"></div>
<div class="abs t tc" style="left:1181.5px;top:179.5px;font-size:12.5px;color:#f8f8f8;letter-spacing:0.1px">Utility Programs</div>
<div class="abs rg" style="left:1240px;top:82px;width:52px;height:107px;"></div>
<div class="abs rlab" style="left:1241px;top:171px;width:50px;height:17px;"></div>
<div class="abs t tc" style="left:1266.0px;top:179.5px;font-size:12.5px;color:#f8f8f8;letter-spacing:0.1px">Exit</div>
<svg class="abs" style="left:1376px;top:168px" width="11" height="12" viewBox="0 0 11 12"><path d="M1 6l4.500-4.500L10 6M1 11l4.500-4.500L10 11" stroke="#555" stroke-width="1.300" fill="none"/></svg>
<svg class="abs" style="left:54px;top:89px" width="32" height="40" viewBox="0 0 32 40"><path d="M2 39q-1-12 8-14h12q9 2 8 14z" fill="#1a1a1a"/><path d="M9 25q7 6 14 0l-2 5q-5 3-10 0z" fill="#f4f4f4"/><path d="M15 27l1 4 1-4z" fill="#222"/><ellipse cx="16" cy="17.500" rx="6" ry="7.500" fill="#f3b56a"/><path d="M16 3L4 8l12 5 12-5z" fill="#222"/><path d="M9.500 10.500v4.500q6.500 3 13 0v-4.500l-6.500 2.800z" fill="#2c2c2c"/><path d="M8 9v8" stroke="#e8b820" stroke-width="1.300"/></svg>
<div class="abs t tc" style="left:69.5px;top:143.5px;font-size:12.5px;color:#262626;letter-spacing:0.05px">How to</div>
<div class="abs t tc" style="left:69.5px;top:159.5px;font-size:12.5px;color:#262626;letter-spacing:-0.3px">make a PCB</div>
<svg class="abs" style="left:118px;top:91px" width="40" height="40" viewBox="0 0 40 40"><rect x="2" y="17" width="36" height="20" fill="#1850d0"/><rect x="2" y="17" width="36" height="20" fill="url(#gclap)"/><rect x="2" y="17" width="36" height="20" fill="none" stroke="#111" stroke-width="1.600"/><path d="M1 12h38v5H1z" fill="#111"/><path d="M4 12l3 5h4l-3-5zM12 12l3 5h4l-3-5zM20 12l3 5h4l-3-5zM28 12l3 5h4l-3-5z" fill="#fff"/><path d="M1 9L38 2l1 5L2 14z" fill="#111"/><path d="M5 8.300l4 4.300 4-.8-4-4.300zM13 6.800l4 4.300 4-.8-4-4.300zM21 5.300l4 4.300 4-.8-4-4.300zM29 3.800l4 4.300 4-.8-4-4.300z" fill="#fff"/><defs><linearGradient id="gclap" x1="0" y1="0" x2="1" y2="1"><stop offset="0" stop-color="#0a2a9a"/><stop offset=".5" stop-color="#3a8af0"/><stop offset="1" stop-color="#0a3ac0"/></linearGradient></defs></svg>
<div class="abs t tc" style="left:138px;top:143.5px;font-size:12.5px;color:#262626;letter-spacing:0.05px">Video</div>
<div class="abs t tc" style="left:138px;top:159.5px;font-size:12.5px;color:#262626;letter-spacing:0.05px">Tutorials</div>
<svg class="abs" style="left:191.500px;top:97px" width="36" height="32" viewBox="0 0 38 34"><path d="M2 11L8 2h22l6 9v20H2z" fill="url(#gbx)"/><path d="M2 11L8 2h22l6 9z" fill="#d8955a"/><path d="M16 2l-1 9h8l-1-9z" fill="#f0c89a"/><path d="M15 11h8v6h-8z" fill="#f4d8b4"/><path d="M2 11h34" stroke="#8a4a10" stroke-width=".8"/><path d="M2 11L8 2h22l6 9v20H2z" fill="none" stroke="#8a4a10" stroke-width=".9"/><rect x="26" y="25" width="8" height="4" fill="#e8d8c8"/></svg>
<div class="abs t tc" style="left:209.5px;top:143.5px;font-size:12.5px;color:#262626;letter-spacing:0.05px">Suppliers</div>
<svg class="abs" style="left:257px;top:90px" width="40" height="40" viewBox="0 0 40 40"><path d="M16 2l16 3-3 14H12z" fill="#f2f6fb" stroke="#9ab" stroke-width=".8"/><path d="M4 17l8-5h22l4 6v10l-6 4H8l-4-4z" fill="#2a6fd0"/><path d="M4 17l8-5h22l4 6H6z" fill="#5a9af0"/><path d="M12 12h22l2 3H10z" fill="#222"/><path d="M4 19h34v9l-6 4H8l-4-4z" fill="#1c1c1c" opacity=".82"/><path d="M6 19h26v2H6z" fill="#4a90e8"/><path d="M9 24h18l2 3-3 11H6z" fill="#fafafa" stroke="#aaa" stroke-width=".7"/></svg>
<div class="abs t tc" style="left:276px;top:143.5px;font-size:12.5px;color:#262626;letter-spacing:0.05px">Print</div>
<svg class="abs" style="left:311px;top:96px" width="22" height="24" viewBox="0 0 22 24"><rect x="5" y="4" width="13" height="17" rx="1" fill="#fbf6d0" stroke="#222" stroke-width="1.200"/><path d="M2 8h3M2 12h3M2 16h3M18 8h3M18 12h3M18 16h3" stroke="#222" stroke-width="1.200"/><g transform="translate(8,8) scale(.8)"><path d="M0 -7l2 4.600 5 .500-3.800 3.300 1.100 4.900L0 8.700l-4.300 2.600 1.100-4.900L-7 3.100l5-.500z" fill="#f8cf48" stroke="#b8860b" stroke-width=".8"/></g><path d="M10 10l9 8" stroke="#b01020" stroke-width="2"/></svg>
<svg class="abs" style="left:311px;top:133px" width="22" height="24" viewBox="0 0 22 24"><rect x="5" y="3" width="13" height="18" rx="1" fill="#fbf6c0" stroke="#222" stroke-width="1.200"/><path d="M2 7h3M2 11h3M2 15h3M2 19h3M18 7h3M18 11h3M18 15h3M18 19h3" stroke="#222" stroke-width="1.200"/><text x="11.500" y="17" font-size="13" font-weight="bold" text-anchor="middle" fill="#2a2a9a" font-family="Liberation Sans">S</text></svg>
<div class="abs " style="left:336px;top:88px;width:1px;height:78px;background:#aaadb3;box-shadow:1px 0 0 #f0f0f2"></div>
<svg class="abs" style="left:342px;top:91px" width="40" height="40" viewBox="0 0 40 40"><path d="M9 3h17l7 7v27H9z" fill="url(#gpg)" stroke="#8fb0e0" stroke-width="1"/><path d="M26 3v7h7" fill="#dfe9f8" stroke="#8fb0e0" stroke-width="1"/><path d="M12 14l22 15" stroke="#3a6ab0" stroke-width="3" stroke-linecap="round"/><path d="M12 14l22 15" stroke="#9ac0f0" stroke-width="1"/><g transform="translate(9,11) scale(1.150)"><path d="M0 -7l2 4.600 5 .500-3.800 3.300 1.100 4.900L0 8.700l-4.300 2.600 1.100-4.900L-7 3.100l5-.500z" fill="#f8cf48" stroke="#b8860b" stroke-width=".8"/></g></svg>
<div class="abs t tc" style="left:363px;top:143.5px;font-size:12.5px;color:#262626;letter-spacing:0.05px">Project</div>
<svg class="abs" style="left:398px;top:90px" width="20" height="18" viewBox="0 0 20 18"><path d="M1 16V2h6l2 2.500h7V8" fill="#f8d860" stroke="#b8860b" stroke-width="1"/><path d="M1 16l3.500-8.500H19.500L16 16z" fill="url(#gfo)" stroke="#b8860b" stroke-width="1"/></svg>
<div class="abs t" style="left:424px;top:99.5px;font-size:12.5px;color:#262626;letter-spacing:0.05px">Project</div>
<svg class="abs" style="left:397px;top:116px" width="22" height="22" viewBox="0 0 22 22"><rect x="4.500" y="1.500" width="13" height="19" rx="1.200" fill="#fafafa" stroke="#222" stroke-width="1.300"/><path d="M1.500 5h3M1.500 9h3M1.500 13h3M1.500 17h3M17.500 5h3M17.500 9h3M17.500 13h3M17.500 17h3" stroke="#222" stroke-width="1.200"/><text x="11" y="16" font-size="13" font-weight="bold" text-anchor="middle" fill="#3a3ad0" font-family="Liberation Sans">U</text></svg>
<div class="abs t" style="left:424px;top:127.5px;font-size:12.5px;color:#262626;letter-spacing:0.05px">Part</div>
<svg class="abs" style="left:398px;top:145px" width="20" height="20" viewBox="0 0 20 20"><rect x="1" y="1" width="18" height="18" fill="#222"/><rect x="3" y="3" width="14" height="6" fill="#7fe8e0"/><rect x="3" y="11" width="14" height="6" fill="#7fe8e0"/><rect x="7.500" y="4.500" width="5" height="1.800" fill="#222"/><rect x="7.500" y="12.500" width="5" height="1.800" fill="#222"/></svg>
<div class="abs t" style="left:424px;top:155.5px;font-size:12.5px;color:#262626;letter-spacing:0.05px">Recover</div>
<svg class="abs" style="left:509px;top:90px" width="40" height="40" viewBox="0 0 40 40"><path d="M9 3h17l7 7v27H9z" fill="url(#gpg)" stroke="#8fb0e0" stroke-width="1"/><path d="M26 3v7h7" fill="#dfe9f8" stroke="#8fb0e0" stroke-width="1"/><path d="M12 14l22 15" stroke="#3a6ab0" stroke-width="3" stroke-linecap="round"/><path d="M12 14l22 15" stroke="#9ac0f0" stroke-width="1"/><g transform="translate(9,11) scale(1.150)"><path d="M0 -7l2 4.600 5 .500-3.800 3.300 1.100 4.900L0 8.700l-4.300 2.600 1.100-4.900L-7 3.100l5-.500z" fill="#f8cf48" stroke="#b8860b" stroke-width=".8"/></g></svg>
<div class="abs t tc" style="left:529px;top:143.5px;font-size:12.5px;color:#262626;letter-spacing:0.05px">New Schematic</div>
<svg class="abs" style="left:589px;top:90px" width="40" height="40" viewBox="0 0 40 40"><path d="M9 3h17l7 7v27H9z" fill="url(#gpg)" stroke="#8fb0e0" stroke-width="1"/><path d="M26 3v7h7" fill="#dfe9f8" stroke="#8fb0e0" stroke-width="1"/><path d="M13 8h12M13 11.500h14M13 15h17M13 18.500h17M13 22h17M13 25.500h17M13 29h17M13 32.500h12" stroke="#222" stroke-width="1.700"/><path d="M12 14l22 15" stroke="#3a6ab0" stroke-width="3" stroke-linecap="round"/><path d="M12 14l22 15" stroke="#9ac0f0" stroke-width="1"/><g transform="translate(9,11) scale(1.150)"><path d="M0 -7l2 4.600 5 .500-3.800 3.300 1.100 4.900L0 8.700l-4.300 2.600 1.100-4.900L-7 3.100l5-.500z" fill="#f8cf48" stroke="#b8860b" stroke-width=".8"/></g></svg>
<div class="abs t tc" style="left:609px;top:143.5px;font-size:12.5px;color:#262626;letter-spacing:0.05px">New Text</div>
<svg class="abs" style="left:645px;top:90px" width="20" height="18" viewBox="0 0 20 18"><rect x="1" y="1.500" width="17" height="15" fill="#fdfdfd" stroke="#7a93b8" stroke-width="1.400"/><rect x="1" y="1.500" width="17" height="3" fill="#b9cdea"/><path d="M4 15L16 1l2.500 1.500L7 15z" fill="#2a5aa8"/><path d="M10 8h7v7h-7z" fill="#eee" opacity=".6"/></svg>
<div class="abs t" style="left:671px;top:99.5px;font-size:12.5px;color:#262626;letter-spacing:0.05px">New Spreadsheet</div>
<svg class="abs" style="left:645px;top:116px" width="20" height="22" viewBox="0 0 20 22"><path d="M4 2h9l5 5v14H4z" fill="#fff" stroke="#2a7a5a" stroke-width="1.200"/><path d="M13 2v5h5" fill="#e8f0e8" stroke="#2a7a5a" stroke-width="1"/><rect x="0" y="4" width="11" height="4.500" fill="#e01010"/><path d="M8 17q3-6 4-2t-4 2q4-1 6 0" stroke="#e02020" stroke-width="1" fill="none"/></svg>
<div class="abs t" style="left:671px;top:127.5px;font-size:12.5px;color:#262626;letter-spacing:0.05px">Add PDF</div>
<svg class="abs" style="left:646px;top:145px" width="20" height="20" viewBox="0 0 20 20"><path d="M4 7v8h7M15 7v8" stroke="#222" stroke-width="1.600" fill="none"/><rect x="1" y="1" width="7" height="6" fill="#e01818"/><rect x="10" y="1" width="8" height="6" fill="#1028e0"/><path d="M11 11.500l4 4-4 4-4-4z" fill="#10a030"/></svg>
<div class="abs t" style="left:671px;top:155.5px;font-size:12.5px;color:#262626;letter-spacing:0.05px">New Diagram</div>
<div class="abs " style="left:777px;top:88px;width:1px;height:78px;background:#aaadb3;box-shadow:1px 0 0 #f0f0f2"></div>
<svg class="abs" style="left:787px;top:92px" width="34" height="36" viewBox="0 0 34 36"><path d="M2 3h24l6 5v26H2z" fill="#dcdcdc" stroke="#bdbdbd" stroke-width="1"/><path d="M7 8q8 8 19 22M27 6Q17 16 6 30" stroke="#a4a4a4" stroke-width="3.400" fill="none" stroke-linecap="round"/></svg>
<div class="abs t tc" style="left:803.5px;top:143.5px;font-size:12.5px;color:#9a9a9a;letter-spacing:0.05px">Delete</div>
<svg class="abs" style="left:838px;top:88px" width="22" height="22" viewBox="0 0 24 24"><use href="#i-power"/></svg>
<div class="abs t" style="left:865px;top:99.5px;font-size:12.5px;color:#262626;letter-spacing:0.05px">Close</div>
<svg class="abs" style="left:839px;top:117px" width="20" height="20" viewBox="0 0 24 24"><use href="#i-save"/></svg>
<div class="abs t" style="left:865px;top:127.5px;font-size:12.5px;color:#262626;letter-spacing:0.05px">Save</div>
<svg class="abs" style="left:839px;top:145px" width="20" height="20" viewBox="0 0 24 24"><use href="#i-save"/><path d="M6 3l14 16" stroke="#222" stroke-width="4"/><path d="M6 3l14 16" stroke="#e8d820" stroke-width="2.400"/></svg>
<div class="abs t" style="left:865px;top:155.5px;font-size:12.5px;color:#262626;letter-spacing:0.05px">Save As</div>
<svg class="abs" style="left:934px;top:92px" width="36" height="36" viewBox="0 0 36 36"><path d="M16 17L3 31l3 2 3-3 2 1 2-3 2 .500 5-7z" fill="#e8b828" stroke="#a87808" stroke-width=".8"/><circle cx="24" cy="10" r="8.500" fill="#f0c438" stroke="#a87808" stroke-width=".9"/><circle cx="24" cy="10" r="8.500" fill="url(#gkey)"/><circle cx="26.500" cy="7" r="2.400" fill="#d8dce2" stroke="#a87808" stroke-width=".7"/><defs><radialGradient id="gkey" cx=".35" cy=".3" r=".7"><stop offset="0" stop-color="#fff4b0" stop-opacity=".9"/><stop offset="1" stop-color="#e0a818" stop-opacity=".2"/></radialGradient></defs></svg>
<div class="abs t tc" style="left:952px;top:143.5px;font-size:12.5px;color:#262626;letter-spacing:0.05px">Software</div>
<div class="abs t tc" style="left:952px;top:159.5px;font-size:12.5px;color:#262626;letter-spacing:0.05px">License</div>
<div class="abs" style="left:992px;top:87px;font-size:19px;font-weight:bold;color:#1a22d0;line-height:20px">?</div>
<div class="abs t" style="left:1013px;top:99.5px;font-size:12.5px;color:#262626;letter-spacing:0.05px">What's New!</div>
<svg class="abs" style="left:986px;top:115px" width="24" height="24" viewBox="0 0 24 24"><path d="M6 4h9l5 5v14H6z" fill="#fff" stroke="#222" stroke-width="1.300"/><path d="M15 4v5h5" fill="#eee" stroke="#222" stroke-width="1"/><path d="M11 11h4v4h2.500L13 20l-4.500-5H11z" fill="#e01010"/><path d="M4 1l.8 2.700L7.500 3 5.600 5l1.900 2-2.700-.7L4 9l-.8-2.700L.5 7l1.900-2L.5 3l2.700.7z" fill="#e8e040" stroke="#9a9a20" stroke-width=".4"/></svg>
<div class="abs t" style="left:1013px;top:127.5px;font-size:12.5px;color:#262626;letter-spacing:0.05px">Get Latest Version</div>
<svg class="abs" style="left:988px;top:146px" width="19" height="19" viewBox="0 0 18 18"><circle cx="9" cy="9" r="8" fill="url(#ghl)" stroke="#3a5ac0" stroke-width=".8"/><circle cx="9" cy="9" r="6.500" fill="none" stroke="#9ab8f8" stroke-width=".7"/><text x="9" y="13.300" font-size="12" font-weight="bold" text-anchor="middle" fill="#fff" font-family="Liberation Sans">?</text></svg>
<div class="abs t" style="left:1013px;top:155.5px;font-size:12.5px;color:#262626;letter-spacing:0.05px">About</div>
<svg class="abs" style="left:1132px;top:90px" width="20" height="18" viewBox="0 0 20 18"><rect x="1" y="1.500" width="17" height="15" fill="#fdfdfd" stroke="#7a93b8" stroke-width="1.400"/><rect x="1" y="1.500" width="17" height="3" fill="#b9cdea"/><path d="M4 15L16 1l2.500 1.500L7 15z" fill="#2a5aa8"/></svg>
<div class="abs t" style="left:1158px;top:99.5px;font-size:12.5px;color:#262626;letter-spacing:0.05px">Spreadsheet</div>
<svg class="abs" style="left:1132px;top:116px" width="22" height="22" viewBox="0 0 22 22"><path d="M5 2l11 2 3 5-3 11-12-2-2-9z" fill="#d8d8d8" stroke="#8a8a8a" stroke-width=".9"/><path d="M6 4l9 2 2 3-2 9-10-2-1-7z" fill="#eee"/><path d="M5 17L17 7l1.500 2L7 19z" fill="#e8b828" stroke="#555" stroke-width=".6"/><path d="M5 17l-1 3 3-1z" fill="#333"/><path d="M14 9.500l2.500-2 1.500 2-2.500 2z" fill="#3a6ad0"/></svg>
<div class="abs t" style="left:1158px;top:127.5px;font-size:12.5px;color:#262626;letter-spacing:0.05px">Text Editor</div>
<svg class="abs" style="left:1132px;top:146px" width="20" height="18" viewBox="0 0 20 18"><rect x=".5" y=".5" width="19" height="17" fill="#fff" stroke="#1818d8" stroke-width="1"/><rect x=".5" y=".5" width="19" height="4.500" fill="#1818d8"/><path d="M4.300 5v12.500M8.100 5v12.500M11.900 5v12.500M15.700 5v12.500M.5 8.200h19M.5 11.300h19M.5 14.400h19" stroke="#1818d8" stroke-width="1.200"/><rect x="7" y="1.800" width="6" height="1.400" fill="#fff"/></svg>
<div class="abs t" style="left:1158px;top:155.5px;font-size:12.5px;color:#262626;letter-spacing:0.05px">Scheduler</div>
<svg class="abs" style="left:1249px;top:92px" width="33" height="33" viewBox="0 0 24 24"><use href="#i-power"/></svg>
<div class="abs t tc" style="left:1265.5px;top:143.5px;font-size:12.5px;color:#262626;letter-spacing:0.05px">Exit</div>
<div class="abs " style="left:25px;top:196px;width:1372px;height:26px;background:linear-gradient(#5a5a5a 0,#404040 12%,#343434 45%,#1e1e1e 55%,#262626 100%)"></div>
<div class="abs " style="left:25px;top:194px;width:1372px;height:2px;background:#2c2c2c"></div>
<div class="abs qon" style="left:25.5px;top:197px;width:27.0px;height:24px;"></div>
<div class="abs qon" style="left:54px;top:197px;width:27.5px;height:24px;"></div>
<div class="abs qon" style="left:83px;top:197px;width:27.5px;height:24px;"></div>
<svg class="abs" style="left:28px;top:200px" width="22" height="18" viewBox="0 0 22 18"><path d="M2 1.500h18a1 1 0 0 1 1 1v9a1 1 0 0 1-1 1H11l-5 4.500v-4.500H2a1 1 0 0 1-1-1v-9a1 1 0 0 1 1-1z" fill="#fbd48a" stroke="#b8862a" stroke-width="1.200"/><path d="M7 6h1.500M10.300 6h1.500M13.600 6h1.500" stroke="#8a6a2a" stroke-width="1.200"/></svg>
<div class="abs " style="left:58px;top:203px;width:20.2px;height:11.8px;background:#f00"></div>
<div class="abs t tc" style="left:68.1px;top:209px;font-size:11px;color:#f8c838;font-weight:bold;letter-spacing:-0.3px">Vcc</div>
<svg class="abs" style="left:85px;top:198px" width="24" height="22" viewBox="0 0 24 22"><rect x="1" y="3" width="7" height="7" fill="#1838d8"/><rect x="15" y="2" width="7" height="8" fill="#e84a20"/><rect x="15" y="2" width="7" height="8" fill="none" stroke="#f8c820" stroke-width="1"/><rect x="2" y="14" width="8" height="6" fill="#48c8b8"/><path d="M7 15V6q0-1.500 1.300-1.500T9.500 6V3.500q0-1.500 1.300-1.500T12 3.500V3q0-1.500 1.300-1.500T14.500 3v1.500q0-1.500 1.300-1.500T17 4.500V14q0 4-4 4h-2Q8 18 7 15z" fill="#d4d4d4" stroke="#555" stroke-width=".9"/><rect x="9" y="18" width="7" height="3" fill="#1a1a6a"/></svg>
<div class="abs t" style="left:116px;top:209.6px;font-size:12.5px;color:#f4f4f4;letter-spacing:0.15px">Top Copper</div>
<div class="abs " style="left:185px;top:197.5px;width:37px;height:22.5px;background:#f00;border:1px solid #c44"></div>
<svg class="abs" style="left:207px;top:206px" width="10" height="7" viewBox="0 0 10 7"><path d="M1 1h8L5 6z" fill="#e03030" stroke="#f4b8b8" stroke-width="1"/></svg>
<div class="abs " style="left:227px;top:197.5px;width:28px;height:23.5px;background:#fff"></div>
<div class="abs " style="left:256px;top:197.5px;width:28px;height:23.5px;background:#fff"></div>
<div class="abs " style="left:285px;top:197.5px;width:28px;height:23.5px;background:#fff"></div>
<svg class="abs" style="left:230px;top:199px" width="22" height="20" viewBox="0 0 22 20"><path d="M2 18Q6 12 10 11l3 2Q10 17 2 18z" fill="#111"/><path d="M10 11l6-6 2 2-5 6z" fill="#c8c020" stroke="#444" stroke-width=".6"/><path d="M16 5l4-3.500L21 3l-3 4z" fill="#e01818"/></svg>
<svg class="abs" style="left:259px;top:199px" width="22" height="20" viewBox="0 0 22 20"><path d="M11 1.500l9 8-9 8.500-9-8.500z" fill="#111"/><path d="M11 4.500l5.500 5-5.500 5.500-5.500-5.500z" fill="#58d8d0"/><path d="M9 6l2-1.500 5.500 5-2 2z" fill="#a8f0ea"/><path d="M3.500 14q-1.500 2.500 0 4t0-4z" fill="#2a5ae0" stroke="#2a5ae0" stroke-width="1.500"/></svg>
<div class="abs" style="left:289px;top:194.500px;width:20px;text-align:center;font-family:'Liberation Serif',serif;font-weight:bold;font-size:22px;color:#111;line-height:22px">A</div>
<div class="abs " style="left:290px;top:215.5px;width:18px;height:3.0px;background:#e01010"></div>
<div class="abs " style="left:318px;top:198px;width:363px;height:22.5px;background:#fff;border:1px solid #bbb"></div>
<div class="abs t tc" style="left:499.5px;top:209px;font-size:13px;color:#111;letter-spacing:0.25px">x = 6.75 y = 11.79</div>
<svg class="abs" style="left:690px;top:198px" width="22" height="22"><use href="#i-yarrow"/></svg>
<div class="abs t" style="left:716px;top:209.6px;font-size:12.5px;color:#f4f4f4;letter-spacing:0.15px">Sub Pick</div>
<svg class="abs" style="left:773px;top:198.5px" width="23" height="23"><use href="#i-n1"/></svg>
<div class="abs t" style="left:799px;top:209.6px;font-size:12.5px;color:#f4f4f4;letter-spacing:0.15px">1</div>
<svg class="abs" style="left:814.5px;top:198.5px" width="23" height="23"><use href="#i-n2"/></svg>
<div class="abs t" style="left:841px;top:209.6px;font-size:12.5px;color:#f4f4f4;letter-spacing:0.15px">2</div>
<svg class="abs" style="left:856.5px;top:198.5px" width="23" height="23"><use href="#i-n4"/></svg>
<div class="abs t" style="left:883px;top:209.6px;font-size:12.5px;color:#f4f4f4;letter-spacing:0.15px">4</div>
<svg class="abs" style="left:898.5px;top:198.5px" width="23" height="23"><use href="#i-n5"/></svg>
<div class="abs t" style="left:925px;top:209.6px;font-size:12.5px;color:#f4f4f4;letter-spacing:0.15px">5</div>
<div class="abs qon" style="left:938px;top:197px;width:48px;height:24px;"></div>
<svg class="abs" style="left:940.5px;top:198.5px" width="23" height="23"><use href="#i-n10"/></svg>
<div class="abs t" style="left:968px;top:209.6px;font-size:12.5px;color:#222;letter-spacing:0.15px">10</div>
<div class="abs qon" style="left:987px;top:197px;width:77px;height:24px;"></div>
<svg class="abs" style="left:990px;top:198.5px" width="21" height="21"><use href="#i-obj"/></svg>
<div class="abs t" style="left:1017px;top:209.6px;font-size:12.5px;color:#222;letter-spacing:0.15px">Objects</div>
<div class="abs qon" style="left:1065.5px;top:197px;width:80.5px;height:24px;"></div>
<svg class="abs" style="left:1069px;top:198.5px" width="21" height="21"><use href="#i-rot"/></svg>
<div class="abs t" style="left:1095px;top:209.6px;font-size:12.5px;color:#222;letter-spacing:0.15px">Rotation</div>
<svg class="abs" style="left:1150px;top:199px" width="22" height="22"><use href="#i-mm"/></svg>
<div class="abs t" style="left:1177px;top:209.6px;font-size:12.5px;color:#f4f4f4;letter-spacing:0.15px">MM</div>
<div class="abs qon" style="left:1202px;top:197px;width:52px;height:24px;"></div>
<svg class="abs" style="left:1205px;top:199px" width="22" height="22"><use href="#i-cm"/></svg>
<div class="abs t" style="left:1232px;top:209.6px;font-size:12.5px;color:#222;letter-spacing:0.15px">CM</div>
<svg class="abs" style="left:1258px;top:199px" width="22" height="22"><use href="#i-mil"/></svg>
<div class="abs t" style="left:1285px;top:209.6px;font-size:12.5px;color:#f4f4f4;letter-spacing:0.15px">MIL</div>
<svg class="abs" style="left:1313px;top:199px" width="22" height="22"><use href="#i-ins"/></svg>
<div class="abs t" style="left:1340px;top:209.6px;font-size:12.5px;color:#f4f4f4;letter-spacing:0.15px">INS</div>
<svg class="abs" style="left:1381px;top:204px" width="12" height="12" viewBox="0 0 12 12"><g fill="#d8d8d8"><rect x="9" y="1" width="2" height="2"/><rect x="5" y="5" width="2" height="2"/><rect x="9" y="5" width="2" height="2"/><rect x="1" y="9" width="2" height="2"/><rect x="5" y="9" width="2" height="2"/><rect x="9" y="9" width="2" height="2"/></g></svg>
<div class="abs " style="left:25px;top:222px;width:498px;height:560px;background:#fcfcfc"></div>
<div class="abs " style="left:26px;top:254px;width:1px;height:527px;background:#b8b8b8"></div>
<div class="abs " style="left:26px;top:780px;width:496px;height:1px;background:#b8b8b8"></div>
<div class="abs " style="left:29px;top:254px;width:491.5px;height:523.7px;background:#a9a9a9"></div>
<div class="abs " style="left:522px;top:222px;width:4px;height:560px;background:#dedede"></div>
<div class="abs " style="left:26px;top:223px;width:496px;height:30px;background:linear-gradient(#9b9b9b 0,#949494 35%,#8b8b8b 100%);border-top:1px solid #a8a8a8;border-bottom:1px solid #7c7c7c"></div>
<div class="abs " style="left:26px;top:253px;width:496px;height:1px;background:#c4c4c4"></div>
<div class="abs t tc" style="left:260px;top:238.5px;font-size:12.5px;color:#dedede;letter-spacing:-0.05px">Local Library</div>
<svg class="abs" style="left:32px;top:230px" width="17" height="16" viewBox="0 0 17 16"><rect x="9" y="1" width="5" height="14" rx=".8" fill="#f4f4f4" stroke="#111" stroke-width="1.200"/><path d="M7 3.500h2M7 7h2M7 10.500h2M14 3.500h2M14 7h2M14 10.500h2" stroke="#111" stroke-width="1"/><rect x="1.500" y="1.500" width="3.500" height="3.500" rx=".8" fill="#f4f4f4" stroke="#111" stroke-width="1"/><path d="M3.200 6v9M.500 9h5.500M1 12.500h4.500M1.200 9l2 3.500 2-3.500" stroke="#111" stroke-width="1" fill="none"/></svg>
<svg class="abs" style="left:476px;top:232px" width="12" height="13" viewBox="0 0 12 13"><path d="M2.500 1.500h6M3.500 1.500v5M7.500 1.500v5M1.500 7h8M5.500 7v5" stroke="#cfcfcf" stroke-width="1.400" fill="none"/></svg>
<svg class="abs" style="left:502px;top:233px" width="11" height="11" viewBox="0 0 11 11"><path d="M1.500 2l8 7M9.500 2l-8 7" stroke="#d4d4d4" stroke-width="2.200"/></svg>
<div class="abs " style="left:31px;top:254px;width:489px;height:1px;background:#c8c8c8"></div>
<div class="abs pbtn" style="left:77px;top:270px;width:90px;height:27px;"></div>
<svg class="abs" style="left:81px;top:273px" width="22" height="22" viewBox="0 0 22 22"><rect x="6" y="6" width="14" height="14" fill="#f4f8ff" stroke="#5a84d0" stroke-width="1"/><rect x="6" y="6" width="14" height="3" fill="#6a98e0"/><path d="M9.500 9v11M13 9v11M16.500 9v11M6 12.500h14M6 16h14" stroke="#8ab0ec" stroke-width="1"/><circle cx="8" cy="6.500" r="4.500" fill="#e8f0fa" stroke="#888" stroke-width="1.200"/><path d="M4.500 10l-3.500 4" stroke="#c89030" stroke-width="2.400"/></svg>
<div class="abs t" style="left:103px;top:283.5px;font-size:16.8px;color:#1f1f1f;font-weight:bold;color:#1f1f1f;letter-spacing:0.5px;width:60.500px;display:flex;justify-content:center;overflow:hidden"><span style="flex:none">Catalog</span></div>
<div class="abs pbtn" style="left:173px;top:270px;width:102px;height:27px;"></div>
<svg class="abs" style="left:177px;top:273px" width="21" height="21" viewBox="0 0 21 21"><rect x=".5" y=".5" width="20" height="20" rx="3" fill="#e88a28"/><path d="M7 6l3 4 1-5 2 .5-.5 6 3-.5.500 2-4 6H8l-3-5 1.500-1.500L8 14z" fill="#fbe6d0"/><path d="M8 3l1.500.8L11 3l-.3 1.800L12 6l-1.800.2L9.500 8l-.7-1.800L7 6l1.300-1.200z" fill="#fbe6d0"/></svg>
<div class="abs t" style="left:198.5px;top:283.5px;font-size:16.8px;color:#1f1f1f;font-weight:bold;color:#1f1f1f;letter-spacing:0.5px;width:73.300px;display:flex;justify-content:center;overflow:hidden"><span style="flex:none">SnapEDA</span></div>
<div class="abs pbtn" style="left:279px;top:270px;width:59px;height:27px;"></div>
<svg class="abs" style="left:283px;top:273px" width="18" height="21" viewBox="0 0 18 21"><rect x="4" y="1.500" width="10" height="18" rx="1" fill="#fbf6c0" stroke="#111" stroke-width="1.300"/><path d="M1 5h3M1 9h3M1 13h3M1 17h3M14 5h3M14 9h3M14 13h3M14 17h3" stroke="#111" stroke-width="1.200"/><text x="9" y="12.500" font-size="6.500" font-weight="bold" text-anchor="middle" fill="#111" font-family="Liberation Sans">R</text></svg>
<div class="abs t" style="left:304.5px;top:283.5px;font-size:16.8px;color:#1f1f1f;font-weight:bold;color:#1f1f1f;letter-spacing:0.5px;width:30.500px;display:flex;justify-content:center;overflow:hidden"><span style="flex:none">CSE</span></div>
<div class="abs pbtn" style="left:343px;top:270px;width:89px;height:27px;"></div>
<svg class="abs" style="left:347px;top:275px" width="20" height="18" viewBox="0 0 20 18"><rect width="20" height="18" rx="1" fill="#0a5ab0"/><path d="M3 16V3l4.500 7L10 6l2.500 4L17 3v13" stroke="#fff" stroke-width="2.600" fill="none"/><path d="M3 16V3l4.500 7L10 6l2.500 4L17 3v13" stroke="#9ad" stroke-width=".8" fill="none"/></svg>
<div class="abs t" style="left:369.4px;top:283.5px;font-size:16.8px;color:#1f1f1f;font-weight:bold;color:#1f1f1f;letter-spacing:0.5px;width:59.100px;display:flex;justify-content:center;overflow:hidden"><span style="flex:none">Mouser</span></div>
<div class="abs pbtn" style="left:437px;top:270px;width:28px;height:27px;"></div>
<svg class="abs" style="left:441px;top:275px" width="20" height="17" viewBox="0 0 20 17"><path d="M1 15.500V1.500h6l2 2.500h7V7" fill="#f8d860" stroke="#b8860b" stroke-width="1"/><path d="M1 15.500l3.500-8.500H19.500L16 15.500z" fill="url(#gfo)" stroke="#b8860b" stroke-width="1"/></svg>
<div class="abs " style="left:114.5px;top:317.3px;width:103.0px;height:24.7px;background:linear-gradient(#8a8a8a 0,#7a7a7a 40%,#5c5c5c 100%);border:1px solid #6a6a6a;border-bottom:none;border-radius:3px 3px 0 0;box-shadow:inset 1px 1px 0 #a4a4a4"></div>
<div class="abs " style="left:219.5px;top:317.3px;width:10.5px;height:24.7px;background:linear-gradient(#8a8a8a 0,#7a7a7a 40%,#5c5c5c 100%);border:1px solid #6a6a6a;border-right:none;border-bottom:none;border-radius:3px 0 0 0;box-shadow:inset 1px 1px 0 #a4a4a4"></div>
<div class="abs " style="left:35px;top:317px;width:77px;height:26px;background:linear-gradient(#f6f6f6,#e8e8e8);border:1px solid #fbfbfb;border-bottom:none;border-radius:4px 4px 0 0"></div>
<svg class="abs" style="left:44px;top:320px" width="18" height="18" viewBox="0 0 18 18"><rect x="3.500" y="1" width="11" height="15.500" rx="1" fill="#fcfacc" stroke="#111" stroke-width="1.300"/><path d="M1 4h2.500M1 7h2.500M1 10h2.500M1 13h2.500M14.500 4h2.500M14.500 7h2.500M14.500 10h2.500M14.500 13h2.500" stroke="#111" stroke-width="1.100"/><path d="M6 4.500h1M8.500 4.500h1M6 7.500h1M8.500 7.500h1M6 10.500h1M8.500 10.500h1" stroke="#666" stroke-width="1"/></svg>
<div class="abs t" style="left:64px;top:329.5px;font-size:12.5px;color:#222;letter-spacing:0.1px">Library</div>
<svg class="abs" style="left:124px;top:321px" width="19" height="17" viewBox="0 0 19 17"><circle cx="12" cy="4" r="3" fill="#f0e0c0" stroke="#888" stroke-width=".6"/><path d="M7 12q0-5 5-5t5 5z" fill="#d8d8d8" stroke="#888" stroke-width=".6"/><circle cx="5" cy="5.500" r="2.600" fill="#f0e0c0" stroke="#888" stroke-width=".6"/><path d="M1 13q0-4.500 4-4.500T9 13z" fill="#c8c8c8" stroke="#888" stroke-width=".6"/><circle cx="8.500" cy="8.500" r="4" fill="#f8d848" fill-opacity=".75" stroke="#8a6a10" stroke-width="1.100"/><path d="M11.500 11.500l5 4.500" stroke="#333" stroke-width="1.600"/></svg>
<div class="abs t" style="left:144.5px;top:329.5px;font-size:12.5px;color:#f6f6f6;letter-spacing:0px">Community</div>
<svg class="abs" style="left:238px;top:323px" width="7" height="9" viewBox="0 0 7 9"><path d="M6 .5v8L1 4.500z" fill="#b6b6b6"/></svg>
<svg class="abs" style="left:262px;top:323px" width="7" height="9" viewBox="0 0 7 9"><path d="M1 .5v8L6 4.500z" fill="#2c2c2c"/></svg>
<div class="abs " style="left:33px;top:342px;width:245px;height:198px;background:#e8e8e8;border:1px solid #fdfdfd;border-top:1px solid #efefef;box-shadow:inset -1px -1px 0 #c4c4c4"></div>
<div class="abs " style="left:76px;top:343px;width:199px;height:25.5px;background:#ffe0c0;border:1px solid #fcd4ac;border-top:none"></div>
<svg class="abs" style="left:56px;top:348px" width="16" height="15" viewBox="0 0 16 15"><path d="M1 3V1.500h5V3" fill="#f8e080" stroke="#a06a10" stroke-width="1"/><rect x="1" y="3" width="14" height="11" rx="1" fill="url(#gfo)" stroke="#a06a10" stroke-width="1.100"/></svg>
<div class="abs t" style="left:81px;top:356.5px;font-size:12.5px;color:#111;letter-spacing:0.1px">My Parts</div>
<div class="abs " style="left:278px;top:315px;width:9px;height:230px;background:#a9a9a9"></div>
<div class="abs " style="left:280.5px;top:315px;width:6.3px;height:230px;background:#8c8c8c;border-left:1px solid #f0f0f0"></div>
<svg class="abs" style="left:281px;top:420px" width="4" height="16" viewBox="0 0 4 16"><g fill="#f4f4f4"><rect x="1" y="1" width="2" height="2"/><rect x="1" y="5" width="2" height="2"/><rect x="1" y="9" width="2" height="2"/><rect x="1" y="13" width="2" height="2"/></g></svg>
<div class="abs " style="left:287px;top:315px;width:231px;height:230px;background:#fff"></div>
<div class="abs ibtn" style="left:125.8px;top:553.7px;width:26.2px;height:25.6px;"></div>
<div class="abs ibtn" style="left:158.8px;top:553.7px;width:26.2px;height:25.6px;"></div>
<div class="abs ibtn" style="left:192.3px;top:553.7px;width:26.2px;height:25.6px;"></div>
<div class="abs ibtn" style="left:225.8px;top:553.7px;width:26.2px;height:25.6px;"></div>
<div class="abs ibtn" style="left:258.8px;top:553.7px;width:26.2px;height:25.6px;"></div>
<div class="abs ibtn" style="left:291.8px;top:553.7px;width:26.2px;height:25.6px;"></div>
<div class="abs ibtn" style="left:324.8px;top:553.7px;width:26.2px;height:25.6px;"></div>
<div class="abs ibtn" style="left:357.8px;top:553.7px;width:26.2px;height:25.6px;"></div>
<div class="abs ibtn" style="left:390.8px;top:553.7px;width:26.2px;height:25.6px;"></div>
<svg class="abs" style="left:130px;top:557px" width="18" height="19" viewBox="0 0 18 19"><path d="M5 9V6q0-4 4-4t4 4v3" fill="none" stroke="#c8a030" stroke-width="2.200"/><rect x="2.500" y="8.500" width="13" height="9.500" rx="1.500" fill="url(#gfo)" stroke="#a07a10" stroke-width="1"/><path d="M9 11v4M7 15h4" stroke="#5a4a10" stroke-width="1.600"/></svg>
<svg class="abs" style="left:163px;top:557px" width="18" height="19" viewBox="0 0 24 24"><path d="M5 7.500Q13 3 16.500 9T13 21.500" fill="none" stroke="#b4b4b4" stroke-width="3.200" stroke-linecap="round"/><path d="M3 3.500l8 1-5.500 6.500z" fill="#bdbdbd"/></svg>
<svg class="abs" style="left:196px;top:557px" width="19" height="19" viewBox="0 0 19 19"><path d="M2 15L12 3l3 2.500L5 17.500l-3.500 1z" fill="#cfcfcf" stroke="#9a9a9a" stroke-width="1"/><path d="M3 3l13 13" stroke="#a8a8a8" stroke-width="2"/><path d="M14 1v4M12 3h4" stroke="#b0b0b0" stroke-width="1"/></svg>
<svg class="abs" style="left:229px;top:556px" width="20" height="21" viewBox="0 0 20 21"><path d="M7 4V2h6v2" fill="none" stroke="#111" stroke-width="1.600"/><rect x="1.500" y="4" width="17" height="3" fill="#222"/><path d="M3 7h14l-1 13H4z" fill="#f0f0f0" stroke="#111" stroke-width="1.400"/><path d="M6.500 9v9M10 9v9M13.500 9v9" stroke="#111" stroke-width="1.600"/></svg>
<svg class="abs" style="left:262px;top:558px" width="20" height="17" viewBox="0 0 20 17"><path d="M1 15.500V1.500h6l2 2.500h7V7" fill="#f8d860" stroke="#b8860b" stroke-width="1"/><path d="M1 15.500l3.500-8.500H19.500L16 15.500z" fill="url(#gfo)" stroke="#b8860b" stroke-width="1"/></svg>
<svg class="abs" style="left:293px;top:555px" width="23" height="23" viewBox="0 0 18 18"><circle cx="9" cy="9" r="8" fill="#0a18d8" stroke="#061088" stroke-width=".8"/><text x="9" y="13.500" font-size="13" font-weight="bold" text-anchor="middle" fill="#fff" font-family="Liberation Sans">?</text></svg>
<svg class="abs" style="left:328px;top:557px" width="20" height="19" viewBox="0 0 20 19"><path d="M2 1.500h7l2 2V12H2z" fill="#f4f8ff" stroke="#5a84d0" stroke-width="1"/><path d="M4 4.500h4M4 6.500h5M4 8.500h5" stroke="#7a9ad8" stroke-width=".9"/><path d="M8 6.500h7l3 3V18H8z" fill="#f4f8ff" stroke="#5a84d0" stroke-width="1"/><path d="M10 10.500h5M10 12.500h6M10 14.500h6" stroke="#7a9ad8" stroke-width=".9"/></svg>
<svg class="abs" style="left:361px;top:556px" width="19" height="21" viewBox="0 0 19 21"><rect x="4.500" y="1.500" width="10" height="18" fill="#e4e4e4" stroke="#555" stroke-width="1" stroke-dasharray="2 1"/><path d="M1 5h3M1 9h3M1 13h3M1 17h3M15 5h3M15 9h3M15 13h3M15 17h3" stroke="#555" stroke-width="1"/><path d="M7 5h1M10 6h1M7 8.500h2M10 11h1M7 13h1M9 15.500h2" stroke="#222" stroke-width="1.200"/></svg>
<svg class="abs" style="left:393px;top:556px" width="22" height="21" viewBox="0 0 22 21"><rect x="2" y="3" width="13" height="15" rx="1" fill="#e8b838" stroke="#8a6a10" stroke-width="1"/><rect x="5.500" y="1" width="6" height="4" rx="1" fill="#555"/><rect x="4" y="5.500" width="9" height="8" fill="#fbe8a8"/><path d="M10 10h8l2 2v8H10z" fill="#f4f8ff" stroke="#445a9a" stroke-width="1"/><path d="M12 13.500h5M12 16h6" stroke="#445a9a" stroke-width="1"/></svg>
<div class="abs " style="left:31px;top:588.5px;width:487px;height:6.0px;background:#9c9c9c;border-top:1px solid #d0d0d0;border-bottom:1px solid #c4c4c4"></div>
<svg class="abs" style="left:266px;top:590.500px" width="16" height="3" viewBox="0 0 16 3"><g fill="#f8f8f8"><rect x="1" y="0" width="2" height="2"/><rect x="5" y="0" width="2" height="2"/><rect x="9" y="0" width="2" height="2"/><rect x="13" y="0" width="2" height="2"/></g></svg>
<div class="abs " style="left:143px;top:597.5px;width:76.5px;height:24.5px;background:linear-gradient(#8a8a8a 0,#7a7a7a 40%,#5c5c5c 100%);border:1px solid #6a6a6a;border-bottom:none;border-radius:3px 3px 0 0;box-shadow:inset 1px 1px 0 #a4a4a4"></div>
<div class="abs " style="left:35px;top:597px;width:105.5px;height:26px;background:linear-gradient(#f6f6f6,#e8e8e8);border:1px solid #fbfbfb;border-bottom:none;border-radius:4px 4px 0 0"></div>
<svg class="abs" style="left:45px;top:601px" width="16" height="16" viewBox="0 0 16 16"><rect x=".6" y=".6" width="14.800" height="14.800" fill="#fff" stroke="#111" stroke-width="1.200"/><rect x="5" y="3" width="6" height="10" rx=".6" fill="#fcfacc" stroke="#111" stroke-width="1"/><path d="M3 5.500h2M3 8h2M3 10.500h2M11 5.500h2M11 8h2M11 10.500h2" stroke="#111" stroke-width=".9"/></svg>
<div class="abs t" style="left:64px;top:609.5px;font-size:12.5px;color:#222;letter-spacing:0.2px">Part Viewer</div>
<svg class="abs" style="left:153px;top:601px" width="16" height="16" viewBox="0 0 16 16"><rect x=".6" y=".6" width="14.800" height="14.800" fill="#f4f4f4" stroke="#111" stroke-width="1.200"/><path d="M3 4h10M3 6.500h7M3 9h10M3 11.500h8" stroke="#111" stroke-width="1.200"/></svg>
<div class="abs t" style="left:172px;top:609.5px;font-size:12.5px;color:#f6f6f6;letter-spacing:0.2px">Details</div>
<div class="abs " style="left:32px;top:622px;width:482.5px;height:150px;background:#e8e8e8"></div>
<div class="abs t tc" style="left:269.7px;top:698.4px;font-size:42.5px;color:#2e2e2e;font-weight:bold;letter-spacing:0.1px;-webkit-text-stroke:0.5px #2e2e2e">Nothing Selected</div>
<div class="abs " style="left:32px;top:772px;width:482.5px;height:1.5px;background:#8e8e8e"></div>
<div class="abs " style="left:526px;top:781px;width:871px;height:1px;background:#f4f4f4"></div>
<div class="abs " style="left:526px;top:222px;width:871px;height:560px;background:#fff"></div>
<div class="abs " style="left:528px;top:224.8px;width:99px;height:25.2px;background:linear-gradient(#8e8e8e 0,#7c7c7c 45%,#5e5e5e 100%);border:1px solid #6a6a6a;border-bottom:none;border-radius:4px 4px 0 0;box-shadow:inset 1px 1px 0 #a8a8a8"></div>
<svg class="abs" style="left:537px;top:229px" width="17" height="16" viewBox="0 0 17 16"><path d="M5 6v5.500h4M11 0v4" stroke="#111" stroke-width="1.200" fill="none"/><rect x="1" y="2.500" width="4.500" height="5" rx=".8" fill="#f0e828" stroke="#111" stroke-width="1"/><rect x="8.500" y="4" width="5.500" height="9.500" rx=".8" fill="#f0e828" stroke="#111" stroke-width="1"/><path d="M14 8.500h2.500" stroke="#111" stroke-width="1.200"/></svg>
<div class="abs t" style="left:558.5px;top:237.5px;font-size:12.5px;color:#f6f6f6;letter-spacing:0.1px">Schematic</div>
<svg class="abs" style="left:1376px;top:231px" width="9" height="9" viewBox="0 0 9 9"><path d="M1 1l7 7M8 1L1 8" stroke="#222" stroke-width="1.800"/></svg>
<div class="abs " style="left:526px;top:249px;width:866.5px;height:533px;background:#e8e8e8"></div>
<div class="abs " style="left:526px;top:249px;width:866.5px;height:1px;background:#c8c8c8"></div>
<div class="abs " style="left:1392.5px;top:250px;width:1.0px;height:501px;background:#d4d4d4"></div>
<div class="abs " style="left:628px;top:224px;width:97px;height:27px;background:linear-gradient(#f4f4f4,#e9e9e9 70%,#e8e8e8);border:1px solid #d0d0d0;border-bottom:none;border-radius:4px 4px 0 0"></div>
<svg class="abs" style="left:639px;top:229px" width="16" height="16" viewBox="0 0 16 16"><rect width="16" height="16" fill="#050505"/><rect x="7.500" y="0" width="3.500" height="16" fill="#1a1ad8"/><path d="M0 5h4M12 8h4" stroke="#e02020" stroke-width="1"/><g fill="#f0e828"><rect x="3.500" y="3.500" width="2.200" height="2.200"/><rect x="3.500" y="7" width="2.200" height="2.200"/><rect x="3.500" y="10.500" width="2.200" height="2.200"/><rect x="11.500" y="3.500" width="2.200" height="2.200"/><rect x="11.500" y="7" width="2.200" height="2.200"/><rect x="11.500" y="10.500" width="2.200" height="2.200"/></g></svg>
<div class="abs t" style="left:658.5px;top:237.5px;font-size:12.5px;color:#333;letter-spacing:0px">PCB - Top</div>
<svg class="abs" style="left:544px;top:269px" width="847" height="482" viewBox="544 269 847 482"><rect x="544" y="269" width="847" height="482" fill="#000"/><path d="M561.5 269V751M593.5 269V751M626.5 269V751M658.5 269V751M690.5 269V751M722.5 269V751M755.5 269V751M787.5 269V751M819.5 269V751M851.5 269V751M884.5 269V751M916.5 269V751M948.5 269V751M980.5 269V751M1013.5 269V751M1045.5 269V751M1077.5 269V751M1109.5 269V751M1142.5 269V751M1174.5 269V751M1206.5 269V751M1238.5 269V751M1271.5 269V751M1303.5 269V751M1335.5 269V751M1367.5 269V751M544 279.5H1391M544 311.5H1391M544 344.5H1391M544 376.5H1391M544 408.5H1391M544 440.5H1391M544 472.5H1391M544 505.5H1391M544 537.5H1391M544 569.5H1391M544 601.5H1391M544 633.5H1391M544 666.5H1391M544 698.5H1391M544 730.5H1391" stroke="#a4a4a4" stroke-width="1" fill="none" opacity=".56"/><rect x="723.500" y="403.500" width="491" height="326" fill="none" stroke="#fafafa" stroke-width="3"/><rect x="866.500" y="285.500" width="16" height="98" fill="none" stroke="#e4e4e4" stroke-width="1.300"/><g fill="#f4f000"><circle cx="870.300" cy="290.0" r="2.400"/><circle cx="878.300" cy="290.0" r="2.400"/><circle cx="870.300" cy="298.2" r="2.400"/><circle cx="878.300" cy="298.2" r="2.400"/><circle cx="870.300" cy="306.3" r="2.400"/><circle cx="878.300" cy="306.3" r="2.400"/><circle cx="870.300" cy="314.5" r="2.400"/><circle cx="878.300" cy="314.5" r="2.400"/><circle cx="870.300" cy="322.7" r="2.400"/><circle cx="878.300" cy="322.7" r="2.400"/><circle cx="870.300" cy="330.9" r="2.400"/><circle cx="878.300" cy="330.9" r="2.400"/><circle cx="870.300" cy="339.0" r="2.400"/><circle cx="878.300" cy="339.0" r="2.400"/><circle cx="870.300" cy="347.2" r="2.400"/><circle cx="878.300" cy="347.2" r="2.400"/><circle cx="870.300" cy="355.4" r="2.400"/><circle cx="878.300" cy="355.4" r="2.400"/><circle cx="870.300" cy="363.5" r="2.400"/><circle cx="878.300" cy="363.5" r="2.400"/><circle cx="870.300" cy="371.7" r="2.400"/><circle cx="878.300" cy="371.7" r="2.400"/><circle cx="870.300" cy="379.9" r="2.400"/><circle cx="878.300" cy="379.9" r="2.400"/><circle cx="1029.600" cy="318.7" r="2.400"/><circle cx="1037.800" cy="318.7" r="2.400"/><circle cx="1029.600" cy="326.9" r="2.400"/><circle cx="1037.800" cy="326.9" r="2.400"/><circle cx="1029.600" cy="335.0" r="2.400"/><circle cx="1037.800" cy="335.0" r="2.400"/><circle cx="1029.600" cy="343.2" r="2.400"/><circle cx="1037.800" cy="343.2" r="2.400"/><circle cx="1029.600" cy="351.4" r="2.400"/><circle cx="1037.800" cy="351.4" r="2.400"/></g><rect x="1025.700" y="314.500" width="16" height="60" fill="none" stroke="#e4e4e4" stroke-width="1.300"/><rect x="875.600" y="357.600" width="90" height="29" fill="none" stroke="#e4e4e4" stroke-width="1.300"/><rect x="879.500" y="365.800" width="12.700" height="12.700" fill="#f4f000"/><circle cx="886" cy="372" r="4" fill="#000"/><g fill="#f4f000"><rect x="909.6" y="361.3" width="3.400" height="3.400"/><rect x="917.7" y="361.3" width="3.400" height="3.400"/><rect x="925.9" y="361.3" width="3.400" height="3.400"/><rect x="934.0" y="361.3" width="3.400" height="3.400"/><rect x="942.2" y="361.3" width="3.400" height="3.400"/><rect x="913.6" y="367.3" width="3.400" height="3.400"/><rect x="921.7" y="367.3" width="3.400" height="3.400"/><rect x="929.9" y="367.3" width="3.400" height="3.400"/><rect x="938.0" y="367.3" width="3.400" height="3.400"/><rect x="946.2" y="367.3" width="3.400" height="3.400"/><rect x="909.6" y="373.3" width="3.400" height="3.400"/><rect x="917.7" y="373.3" width="3.400" height="3.400"/><rect x="925.9" y="373.3" width="3.400" height="3.400"/><rect x="934.0" y="373.3" width="3.400" height="3.400"/><rect x="942.2" y="373.3" width="3.400" height="3.400"/><rect x="913.6" y="379.3" width="3.400" height="3.400"/><rect x="921.7" y="379.3" width="3.400" height="3.400"/><rect x="929.9" y="379.3" width="3.400" height="3.400"/><rect x="938.0" y="379.3" width="3.400" height="3.400"/><rect x="946.2" y="379.3" width="3.400" height="3.400"/></g><text x="865" y="278" font-size="4.500" fill="#aaa" font-family="Liberation Sans">1</text><text x="1026" y="306" font-size="4.500" fill="#aaa" font-family="Liberation Sans">L5</text><text x="926" y="728" font-size="5" fill="#ccc" font-family="Liberation Sans">NONE</text></svg>
<svg class="abs" style="left:526px;top:249px" width="867" height="20" viewBox="526 249 867 20"><path d="M561.5 260V269M593.5 264V269M626.5 264V269M658.5 264V269M690.5 264V269M722.5 254V269M755.5 264V269M787.5 264V269M819.5 264V269M851.5 264V269M884.5 260V269M916.5 264V269M948.5 264V269M980.5 264V269M1013.5 264V269M1045.5 254V269M1077.5 264V269M1109.5 264V269M1142.5 264V269M1174.5 264V269M1206.5 260V269M1238.5 264V269M1271.5 264V269M1303.5 264V269M1335.5 264V269M1367.5 254V269" stroke="#111" stroke-width="1.100" fill="none"/><text x="725.5" y="261" font-size="9.500" fill="#111" font-family="Liberation Sans">0</text><text x="1048.5" y="261" font-size="9.500" fill="#111" font-family="Liberation Sans">10</text><text x="1370.5" y="261" font-size="9.500" fill="#111" font-family="Liberation Sans">20</text></svg>
<svg class="abs" style="left:526px;top:269px" width="18" height="482" viewBox="526 269 18 482"><path d="M539 279.5H544M539 311.5H544M539 344.5H544M539 376.5H544M530 408.5H544M539 440.5H544M539 472.5H544M539 505.5H544M539 537.5H544M539 569.5H544M539 601.5H544M539 633.5H544M539 666.5H544M539 698.5H544M530 730.5H544" stroke="#111" stroke-width="1.100" fill="none"/><text transform="translate(538,405.5) rotate(-90)" font-size="9.500" fill="#111" font-family="Liberation Sans">10</text><text transform="translate(538,727.5) rotate(-90)" font-size="9.500" fill="#111" font-family="Liberation Sans">0</text></svg>
<div class="abs " style="left:528px;top:252px;width:15px;height:16px;background:#f4f4f4;border:1px solid #111"></div>
<svg class="abs" style="left:530px;top:254px" width="11" height="12" viewBox="0 0 11 12"><path d="M5.500 1v10M.500 6h10" stroke="#111" stroke-width="1.200"/></svg>
<div class="abs " style="left:526px;top:751px;width:871px;height:30px;background:#efefef"></div>
<div class="abs " style="left:526px;top:751px;width:868px;height:1.5px;background:#bdbdbd"></div>
<div class="abs " style="left:526px;top:752.5px;width:868px;height:1.5px;background:#fbfbfb"></div>
<div class="abs " style="left:528px;top:761px;width:23px;height:17px;background:#fff;border:1px solid #222"></div>
<div class="abs " style="left:564px;top:761px;width:23px;height:17px;background:#c6c6c6;border:1px solid #222"></div>
<div class="abs " style="left:595.5px;top:764px;width:11.5px;height:11.5px;background:#fff;border:1px solid #9a9a9a;box-shadow:inset 1px 1px 0 #c8c8c8, inset -1px -1px 0 #e4e4e4"></div>
<div class="abs " style="left:598.5px;top:767px;width:5.5px;height:5.5px;background:#e0e0e0"></div>
<div class="abs t" style="left:612px;top:769.5px;font-size:12.5px;color:#333;letter-spacing:-0.12px">Reflective</div>
<svg class="abs" style="left:674px;top:760px" width="105" height="19" viewBox="0 0 105 19"><rect x="0" y="0" width="105" height="19" fill="#d8d8d8"/><rect x="1" y="1" width="103" height="15" fill="#f0f0f0" stroke="#888" stroke-width="1"/><rect x="2" y="3" width="101" height="11" fill="#eeeeda"/><rect x="2" y="2" width="101" height="2.500" fill="#3a3a3a"/><rect x="2" y="12.500" width="101" height="2" fill="#6a6a6a"/><rect x="3.0" y="3" width="1.400" height="11" fill="#1a1a1a"/><rect x="7.7" y="3" width="1.400" height="11" fill="#1a1a1a"/><rect x="12.4" y="3" width="1.400" height="11" fill="#1a1a1a"/><rect x="17.1" y="3" width="1.400" height="11" fill="#c4c4c4"/><rect x="21.8" y="3" width="1.400" height="11" fill="#c4c4c4"/><rect x="26.5" y="3" width="1.400" height="11" fill="#c4c4c4"/><rect x="31.2" y="3" width="1.400" height="11" fill="#c4c4c4"/><rect x="35.9" y="3" width="1.400" height="11" fill="#c4c4c4"/><rect x="40.6" y="3" width="1.400" height="11" fill="#c4c4c4"/><rect x="45.3" y="3" width="1.400" height="11" fill="#c4c4c4"/><rect x="50.0" y="3" width="1.400" height="11" fill="#c4c4c4"/><rect x="54.7" y="3" width="1.400" height="11" fill="#c4c4c4"/><rect x="59.4" y="3" width="1.400" height="11" fill="#c4c4c4"/><rect x="64.1" y="3" width="1.400" height="11" fill="#c4c4c4"/><rect x="68.8" y="3" width="1.400" height="11" fill="#c4c4c4"/><rect x="73.5" y="3" width="1.400" height="11" fill="#c4c4c4"/><rect x="78.2" y="3" width="1.400" height="11" fill="#c4c4c4"/><rect x="82.9" y="3" width="1.400" height="11" fill="#c4c4c4"/><rect x="87.6" y="3" width="1.400" height="11" fill="#c4c4c4"/><rect x="92.3" y="3" width="1.400" height="11" fill="#c4c4c4"/><rect x="97.0" y="3" width="1.400" height="11" fill="#1a1a1a"/><rect x="101.7" y="3" width="1.400" height="11" fill="#1a1a1a"/><rect x="0" y="16" width="105" height="3" fill="#bcbcbc"/></svg>
<svg class="abs" style="left:786px;top:758px" width="24" height="23" viewBox="0 0 24 23"><rect x=".6" y=".6" width="22.800" height="21.800" fill="#fff" stroke="#111" stroke-width="1.200"/><path d="M.6.600l22.800 21.800M23.400.600L.6 22.400" stroke="#111" stroke-width="1.100"/></svg>
<div class="abs " style="left:811px;top:758.5px;width:21.5px;height:21.0px;background:#ffffa6;border-top:1px solid #9a9a6a;border-left:1px solid #c8c890"></div>
<div class="abs " style="left:834.4px;top:758.5px;width:22.0px;height:21.5px;background:#000;border:1px solid #2c2c2c;border-right-color:#5a5a5a;border-bottom-color:#5a5a5a"></div>
<div class="abs " style="left:858.4px;top:758.5px;width:22.0px;height:21.5px;background:#1c1c1c;border:1px solid #2c2c2c;border-right-color:#5a5a5a;border-bottom-color:#5a5a5a"></div>
<div class="abs " style="left:882.4px;top:758.5px;width:22.0px;height:21.5px;background:#383838;border:1px solid #2c2c2c;border-right-color:#5a5a5a;border-bottom-color:#5a5a5a"></div>
<div class="abs " style="left:906.4px;top:758.5px;width:22.0px;height:21.5px;background:#515151;border:1px solid #2c2c2c;border-right-color:#5a5a5a;border-bottom-color:#5a5a5a"></div>
<div class="abs " style="left:930.4px;top:758.5px;width:22.0px;height:21.5px;background:#6a6a6a;border:1px solid #2c2c2c;border-right-color:#5a5a5a;border-bottom-color:#5a5a5a"></div>
<div class="abs " style="left:954.4px;top:758.5px;width:22.0px;height:21.5px;background:#828282;border:1px solid #2c2c2c;border-right-color:#5a5a5a;border-bottom-color:#5a5a5a"></div>
<div class="abs " style="left:978.4px;top:758.5px;width:22.0px;height:21.5px;background:#9a9a9a;border:1px solid #2c2c2c;border-right-color:#5a5a5a;border-bottom-color:#5a5a5a"></div>
<div class="abs " style="left:1002.4px;top:758.5px;width:22.0px;height:21.5px;background:#b2b2b2;border:1px solid #2c2c2c;border-right-color:#5a5a5a;border-bottom-color:#5a5a5a"></div>
<div class="abs " style="left:1026.4px;top:758.5px;width:22.0px;height:21.5px;background:#cacaca;border:1px solid #2c2c2c;border-right-color:#5a5a5a;border-bottom-color:#5a5a5a"></div>
<div class="abs " style="left:1050.4px;top:758.5px;width:22.0px;height:21.5px;background:#e0e0e0;border:1px solid #2c2c2c;border-right-color:#5a5a5a;border-bottom-color:#5a5a5a"></div>
<div class="abs " style="left:1074.4px;top:758.5px;width:22.0px;height:21.5px;background:#f0f0f0;border:1px solid #2c2c2c;border-right-color:#5a5a5a;border-bottom-color:#5a5a5a"></div>
<div class="abs " style="left:1098.4px;top:758.5px;width:22.0px;height:21.5px;background:#ff2020;border:1px solid #2c2c2c;border-right-color:#5a5a5a;border-bottom-color:#5a5a5a"></div>
<div class="abs " style="left:1122.4px;top:758.5px;width:22.0px;height:21.5px;background:#da0000;border:1px solid #2c2c2c;border-right-color:#5a5a5a;border-bottom-color:#5a5a5a"></div>
<div class="abs " style="left:1146.4px;top:758.5px;width:22.0px;height:21.5px;background:#cc0000;border:1px solid #2c2c2c;border-right-color:#5a5a5a;border-bottom-color:#5a5a5a"></div>
<div class="abs " style="left:1170.4px;top:758.5px;width:22.0px;height:21.5px;background:#ba0000;border:1px solid #2c2c2c;border-right-color:#5a5a5a;border-bottom-color:#5a5a5a"></div>
<div class="abs " style="left:1194.4px;top:758.5px;width:22.0px;height:21.5px;background:#a80000;border:1px solid #2c2c2c;border-right-color:#5a5a5a;border-bottom-color:#5a5a5a"></div>
<div class="abs " style="left:1218.4px;top:758.5px;width:22.0px;height:21.5px;background:#900000;border:1px solid #2c2c2c;border-right-color:#5a5a5a;border-bottom-color:#5a5a5a"></div>
<div class="abs " style="left:1242.4px;top:758.5px;width:22.0px;height:21.5px;background:#780000;border:1px solid #2c2c2c;border-right-color:#5a5a5a;border-bottom-color:#5a5a5a"></div>
<div class="abs " style="left:1266.4px;top:758.5px;width:22.0px;height:21.5px;background:#5e0000;border:1px solid #2c2c2c;border-right-color:#5a5a5a;border-bottom-color:#5a5a5a"></div>
<div class="abs " style="left:1290.4px;top:758.5px;width:22.0px;height:21.5px;background:#420000;border:1px solid #2c2c2c;border-right-color:#5a5a5a;border-bottom-color:#5a5a5a"></div>
<div class="abs " style="left:1314.4px;top:758.5px;width:22.0px;height:21.5px;background:#280000;border:1px solid #2c2c2c;border-right-color:#5a5a5a;border-bottom-color:#5a5a5a"></div>
<div class="abs " style="left:1338.4px;top:758.5px;width:22.0px;height:21.5px;background:#00ea00;border:1px solid #2c2c2c;border-right-color:#5a5a5a;border-bottom-color:#5a5a5a"></div>
<div class="abs " style="left:1362.4px;top:758.5px;width:22.0px;height:21.5px;background:#00ea00;border:1px solid #2c2c2c;border-right-color:#5a5a5a;border-bottom-color:#5a5a5a"></div>
<div class="abs " style="left:1386.4px;top:758.5px;width:10.1px;height:21.5px;background:#00ea00;border:1px solid #2c2c2c;border-right-color:#5a5a5a;border-bottom-color:#5a5a5a"></div>
<div class="abs " style="left:940.5px;top:350.5px;width:175.5px;height:471.0px;background:#fdfdfd;border:1px solid #a8a8a8;border-top-color:#e0e0e0;border-left-color:#d8d8d8;box-shadow:2px 2px 2px rgba(0,0,0,.45)"></div>
<div class="abs " style="left:941.5px;top:351.5px;width:24.5px;height:469.0px;background:linear-gradient(90deg,#eeeeee,#f4f4f4 60%,#fdfdfd)"></div>
<div class="abs t" style="left:977.3px;top:363.5px;font-size:14.5px;color:#1e1e1e;">SubPick</div>
<div class="abs t" style="left:977.3px;top:387.5px;font-size:14.5px;color:#1e1e1e;">Repeat</div>
<div class="abs t" style="left:977.3px;top:411.5px;font-size:14.5px;color:#1e1e1e;">Undo</div>
<div class="abs t" style="left:977.3px;top:435.5px;font-size:14.5px;color:#1e1e1e;">Paste</div>
<div class="abs " style="left:973px;top:451px;width:141px;height:1px;background:#b8b8b8"></div>
<div class="abs t" style="left:977.5px;top:465.5px;font-size:14.5px;color:#1e1e1e;">Zoom</div>
<div class="abs arr" style="left:1099px;top:462.0px"></div>
<div class="abs t" style="left:977.5px;top:489.5px;font-size:14.5px;color:#1e1e1e;">Pan</div>
<div class="abs arr" style="left:1099px;top:486.0px"></div>
<div class="abs t" style="left:977.5px;top:513.5px;font-size:14.5px;color:#1e1e1e;">Graphics</div>
<div class="abs arr" style="left:1099px;top:510.0px"></div>
<div class="abs " style="left:942.0px;top:526.0px;width:172.5px;height:23.0px;background:#c9d0e2;border:1px solid #3a5ea8"></div>
<div class="abs t" style="left:977.5px;top:537.5px;font-size:14.5px;color:#1e1e1e;">Guides</div>
<div class="abs arr" style="left:1099px;top:534.0px"></div>
<div class="abs t" style="left:977.5px;top:561.5px;font-size:14.5px;color:#1e1e1e;">PCB</div>
<div class="abs arr" style="left:1099px;top:558.0px"></div>
<div class="abs t" style="left:977.5px;top:585.5px;font-size:14.5px;color:#1e1e1e;">Snap/Grid</div>
<div class="abs arr" style="left:1099px;top:582.0px"></div>
<div class="abs t" style="left:977.5px;top:609.5px;font-size:14.5px;color:#1e1e1e;">Units</div>
<div class="abs arr" style="left:1099px;top:606.0px"></div>
<div class="abs t" style="left:977.5px;top:633.5px;font-size:14.5px;color:#1e1e1e;">Snaps per Grid</div>
<div class="abs arr" style="left:1099px;top:630.0px"></div>
<div class="abs t" style="left:977.5px;top:657.5px;font-size:14.5px;color:#1e1e1e;">View</div>
<div class="abs arr" style="left:1099px;top:654.0px"></div>
<div class="abs t" style="left:977.5px;top:681.5px;font-size:14.5px;color:#1e1e1e;">PCB Views</div>
<div class="abs arr" style="left:1099px;top:678.0px"></div>
<div class="abs t" style="left:977.5px;top:705.5px;font-size:14.5px;color:#1e1e1e;">Panels</div>
<div class="abs arr" style="left:1099px;top:702.0px"></div>
<div class="abs " style="left:973px;top:721px;width:141px;height:1px;background:#b8b8b8"></div>
<div class="abs t" style="left:977.5px;top:735.5px;font-size:14.5px;color:#1e1e1e;">Radial Menu</div>
<div class="abs t" style="left:977.5px;top:759.5px;font-size:14.5px;color:#1e1e1e;">Full Screen</div>
<div class="abs t" style="left:977.5px;top:783.5px;font-size:14.5px;color:#1e1e1e;">Schematic</div>
<div class="abs t" style="left:977.5px;top:807.5px;font-size:14.5px;color:#1e1e1e;">3D</div>
<svg class="abs" style="left:947px;top:354px" width="15" height="19" viewBox="0 0 15 19"><path d="M2 1.500l10.500 10-5 .500 3 5-2.300 1.200-2.900-5.200L2 16z" fill="#b8b400" stroke="#55540a" stroke-width="1" stroke-linejoin="round"/></svg>
<svg class="abs" style="left:945px;top:379px" width="17" height="17" viewBox="0 0 17 17"><circle cx="8.500" cy="8.500" r="8" fill="#6cc858" opacity=".35"/><g fill="#4cb838" stroke="#2f8a22" stroke-width=".6"><path d="M5.500 3L8.500.800l3 2.200 1.700 2.900-2.400 1.400-2.300-3.500-1.300 2.200L5 4.700z"/><path d="M1 10.200l1.800-4 2.600 1.400-1.300 2.800h3.200v3H3z"/><path d="M16 10.200l-2-3.600-2.500 1.500 1.600 2.600H9.700v2.800h4.500z"/></g><circle cx="8.500" cy="9" r="2.200" fill="#f4f4f4"/></svg>
<svg class="abs" style="left:944px;top:402px" width="18" height="19" viewBox="0 0 18 19"><path d="M4 5.500Q11 2 13.300 7.500T9.500 17.500" fill="none" stroke="#3c78dc" stroke-width="3" stroke-linecap="round"/><path d="M1.500 1.500l7.500 1.300-5 6z" fill="#6a9cf0"/></svg>
<svg class="abs" style="left:945px;top:428px" width="17" height="15" viewBox="0 0 17 15"><rect x="1" y="2" width="10" height="11.500" rx="1" fill="#e8b838" stroke="#8a6a10" stroke-width=".9"/><rect x="3.500" y=".5" width="5" height="3" rx=".8" fill="#666"/><rect x="2.500" y="4" width="7" height="5" fill="#fbe8a8"/><path d="M7.500 7.500h6l2 2V14H7.500z" fill="#f4f8ff" stroke="#445a9a" stroke-width=".9"/><path d="M9 10h4.500M9 12h5" stroke="#445a9a" stroke-width=".8"/></svg>
<svg class="abs" style="left:945px;top:727px" width="17" height="17" viewBox="0 0 17 17"><circle cx="8.500" cy="8.500" r="7.800" fill="#f4f4f4" stroke="#888" stroke-width=".9"/><path d="M8.500 8.500L8.500.700A7.800 7.800 0 0 1 15.900 6z" fill="#58c8e0"/><path d="M8.500 8.500L15.900 6A7.800 7.800 0 0 1 13 15z" fill="#a06a3a"/><path d="M8.500 8.500L13 15A7.800 7.800 0 0 1 3.500 14.500z" fill="#f0e050"/><path d="M8.500 8.500L3.500 14.500A7.800 7.800 0 0 1 1 6z" fill="#f4f4f4"/><path d="M8.500 8.500L1 6A7.800 7.800 0 0 1 8.500.700z" fill="#48b048"/><circle cx="8.500" cy="8.500" r="7.800" fill="none" stroke="#888" stroke-width=".9"/></svg>
<svg class="abs" style="left:945px;top:751px" width="17" height="17" viewBox="0 0 17 17"><path d="M2 2l13 13M15 2L2 15" stroke="#1010e0" stroke-width="1.600"/><path d="M.500.500h4l-4 4zM16.500.500h-4l4 4zM.500 16.500h4l-4-4zM16.500 16.500h-4l4-4z" fill="#1010e0"/><circle cx="8.500" cy="8.500" r="3.200" fill="#fff" stroke="#1010e0" stroke-width="1.200"/></svg>
<svg class="abs" style="left:945px;top:775px" width="17" height="16" viewBox="0 0 17 16"><path d="M5 6v5.500h4M11 0v4" stroke="#111" stroke-width="1.200" fill="none"/><rect x="1" y="2.500" width="4.500" height="5" rx=".8" fill="#f0e828" stroke="#111" stroke-width="1"/><rect x="8.500" y="4" width="5.500" height="9.500" rx=".8" fill="#f0e828" stroke="#111" stroke-width="1"/><path d="M14 8.500h2.500" stroke="#111" stroke-width="1.200"/></svg>
<svg class="abs" style="left:946px;top:800px" width="15" height="15" viewBox="0 0 15 15"><path d="M1 3l9-2 4 2v9l-9 2.500-4-2z" fill="#0a7a3a"/><path d="M1 3l9-2 4 2-9 2z" fill="#1a9a50"/><path d="M5 5l9-2v9l-9 2.500z" fill="#086a30"/></svg>
<div class="abs " style="left:1115.5px;top:550.5px;width:245.5px;height:218.0px;background:#fdfdfd;border:1px solid #a8a8a8;border-top-color:#dcdcdc;border-left-color:#d0d0d0;box-shadow:2px 2px 2px rgba(0,0,0,.45)"></div>
<div class="abs " style="left:1116.5px;top:551.5px;width:24.5px;height:216.0px;background:linear-gradient(90deg,#eeeeee,#f4f4f4 60%,#fdfdfd)"></div>
<div class="abs t" style="left:1152.5px;top:563.5px;font-size:14.5px;color:#1e1e1e;">Border</div>
<div class="abs t" style="left:1152.5px;top:587.5px;font-size:14.5px;color:#1e1e1e;">Fiducial</div>
<div class="abs t" style="left:1152.5px;top:611.5px;font-size:14.5px;color:#1e1e1e;">Hole</div>
<div class="abs t" style="left:1152.5px;top:635.5px;font-size:14.5px;color:#1e1e1e;">Rectangular Cutout</div>
<div class="abs t" style="left:1152.5px;top:659.5px;font-size:14.5px;color:#1e1e1e;">Elliptical Cutout</div>
<div class="abs t" style="left:1152.5px;top:683.5px;font-size:14.5px;color:#1e1e1e;">Rectangular Copper-Pour</div>
<div class="abs t" style="left:1152.5px;top:707.5px;font-size:14.5px;color:#1e1e1e;">Polygonal Copper-Pour</div>
<div class="abs t" style="left:1152.5px;top:731.5px;font-size:14.5px;color:#1e1e1e;">Renumber Parts</div>
<div class="abs t" style="left:1152.5px;top:755.5px;font-size:14.5px;color:#1e1e1e;">Check Errors</div>
<svg class="abs" style="left:1119px;top:555.5px" width="17" height="17" viewBox="0 0 17 17"><path d="M1 1h15v12h-3.500v3h-8v-3H1z" fill="#109810" stroke="#064a06" stroke-width="1"/></svg>
<svg class="abs" style="left:1119px;top:579.5px" width="17" height="17" viewBox="0 0 17 17"><rect x="1" y="1" width="15" height="15" fill="#109810"/><circle cx="8.500" cy="8.500" r="4.200" fill="#c8f0c8"/><circle cx="8.500" cy="8.500" r="2.600" fill="#fff"/></svg>
<svg class="abs" style="left:1119px;top:603.5px" width="17" height="17" viewBox="0 0 17 17"><rect x="1" y="1" width="15" height="15" fill="#109810"/><circle cx="8.500" cy="8.500" r="4.800" fill="#050505"/></svg>
<svg class="abs" style="left:1119px;top:627.5px" width="17" height="17" viewBox="0 0 17 17"><rect x="1.800" y="2.800" width="13.400" height="11.400" fill="#fff" stroke="#109810" stroke-width="2"/></svg>
<svg class="abs" style="left:1119px;top:651.5px" width="17" height="17" viewBox="0 0 17 17"><rect x="1" y="1.500" width="15" height="14" fill="#109810"/><ellipse cx="8.500" cy="8.500" rx="5.500" ry="4" fill="#f4f4f4"/></svg>
<svg class="abs" style="left:1119px;top:675.5px" width="17" height="17" viewBox="0 0 17 17"><rect x="1.500" y="4.500" width="14" height="8" fill="#f8f020" stroke="#222" stroke-width="1"/></svg>
<svg class="abs" style="left:1119px;top:699.5px" width="17" height="17" viewBox="0 0 17 17"><path d="M2 1.500h9.500v4h-4v5.500h7v4.500H2z" fill="#f8f020" stroke="#222" stroke-width="1.100"/></svg>
<svg class="abs" style="left:1119px;top:723.5px" width="17" height="17" viewBox="0 0 17 17"><rect x="2.500" y="4" width="12" height="9" fill="#f4d8d8" stroke="#222" stroke-width="1"/><path d="M5 1.500V4M8.500 1.500V4M12 1.500V4M5 13v2.500M8.500 13v2.500M12 13v2.500" stroke="#222" stroke-width="1"/><text x="8.500" y="11.500" font-size="7" font-weight="bold" text-anchor="middle" fill="#c01818" font-family="Liberation Sans">T?</text></svg>
<svg class="abs" style="left:1119px;top:747.5px" width="17" height="17" viewBox="0 0 17 17"><path d="M8.500 1.500L16 15.500H1z" fill="#f8d820" stroke="#a8880a" stroke-width="1"/><path d="M8.500 6v5" stroke="#111" stroke-width="1.600"/><circle cx="8.500" cy="13" r="1" fill="#111"/></svg>
</body></html>
